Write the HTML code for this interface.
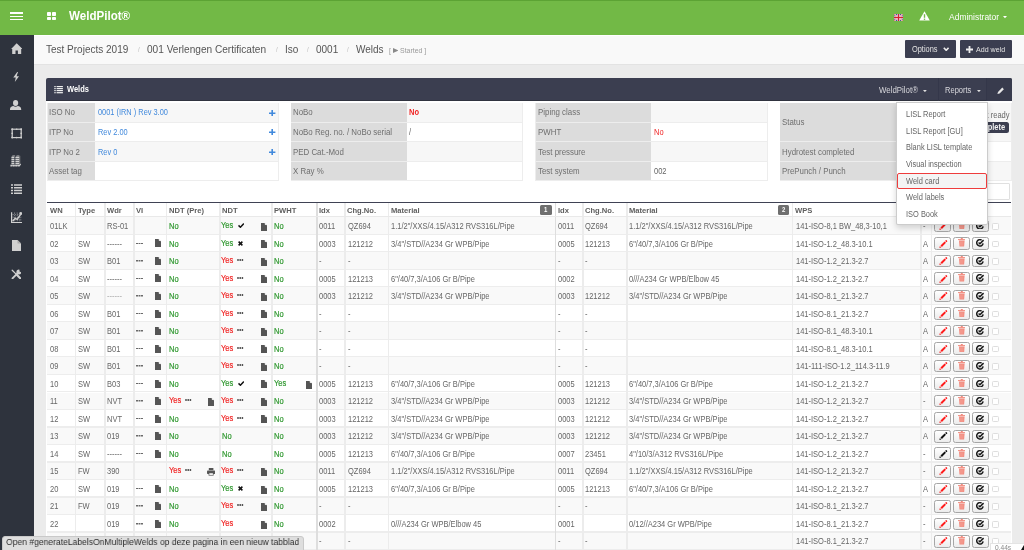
<!DOCTYPE html>
<html><head><meta charset="utf-8"><style>
*{box-sizing:border-box;margin:0;padding:0}
html,body{width:1024px;height:550px;overflow:hidden}
body{background:#ebebeb;font-family:"Liberation Sans", sans-serif;color:#666;position:relative}
.a{position:absolute}
.t{position:absolute;white-space:nowrap;line-height:1;transform-origin:0 0}
#wrap{position:absolute;left:0;top:0;width:1024px;height:550px;overflow:hidden;will-change:transform}
</style></head>
<body><div id="wrap">
<div class="a" style="left:0px;top:0px;width:1024px;height:34.5px;background:#72b946;border-top:1px solid #5ca334"></div><div class="a" style="left:10.2px;top:12.45px;width:12.7px;height:1.4px;background:#fff;"></div><div class="a" style="left:10.2px;top:15.7px;width:12.7px;height:1.4px;background:#fff;"></div><div class="a" style="left:10.2px;top:18.9px;width:12.7px;height:1.4px;background:#fff;"></div><div class="a" style="left:46.6px;top:12.4px;width:4.1px;height:3.2px;background:#fff;border-radius:0.8px"></div><div class="a" style="left:51.9px;top:12.4px;width:4.1px;height:3.2px;background:#fff;border-radius:0.8px"></div><div class="a" style="left:46.6px;top:17.1px;width:4.1px;height:3.2px;background:#fff;border-radius:0.8px"></div><div class="a" style="left:51.9px;top:17.1px;width:4.1px;height:3.2px;background:#fff;border-radius:0.8px"></div><div class="t" style="left:69.3px;top:10px;font-size:12.889px;transform:scaleX(0.9);color:#fff;font-weight:bold;">WeldPilot®</div><svg class="a" style="left:894px;top:14px;" width="9" height="7" viewBox="0 0 9 7"><rect width="9" height="7" fill="#2a3a8c"/><path d="M0 0L9 7M9 0L0 7" stroke="#fff" stroke-width="1.6"/><path d="M0 0L9 7M9 0L0 7" stroke="#d42030" stroke-width="0.6"/><path d="M4.5 0V7M0 3.5H9" stroke="#fff" stroke-width="2.4"/><path d="M4.5 0V7M0 3.5H9" stroke="#d42030" stroke-width="1.3"/></svg><svg class="a" style="left:919.3px;top:11.4px;" width="11" height="9.8" viewBox="0 0 11 9.8"><path d="M5.5 0.3L10.8 9.6H0.2Z" fill="#fff"/><rect x="4.8" y="3.2" width="1.4" height="3.6" fill="#72b946"/><rect x="4.8" y="7.6" width="1.4" height="1.3" fill="#72b946"/></svg><div class="t" style="left:949px;top:12px;font-size:9.444px;transform:scaleX(0.9);color:#fff;">Administrator</div><svg class="a" style="left:1003px;top:16.3px;" width="4" height="2.3" viewBox="0 0 4 2.3"><path d="M0 0H4L2 2.3Z" fill="#fff"/></svg><div class="a" style="left:0px;top:34.5px;width:33.8px;height:516px;background:#2e333d;"></div><svg class="a" style="left:10.8px;top:42.6px;" width="11.4" height="11.4" viewBox="0 0 11.4 11.4"><path d="M5.7 0.2L11.3 5.9H10.2V11.2H6.9V7.6H4.5V11.2H1.2V5.9H0.1Z" fill="#d0d0d0"/></svg><svg class="a" style="left:13px;top:72px;" width="6.4" height="10" viewBox="0 0 6.4 10"><path d="M4.2 0L0.3 5.6H2.8L1.8 10L6.1 4.2H3.6L5 0Z" fill="#d0d0d0"/></svg><svg class="a" style="left:10.4px;top:99.8px;" width="11.2" height="10.4" viewBox="0 0 11.2 10.4"><ellipse cx="5.6" cy="3.1" rx="2.6" ry="3.0" fill="#d0d0d0"/><path d="M0 10.4V9.2C0 7.2 1.6 6.5 3.4 6.1Q5.6 7.4 7.8 6.1C9.6 6.5 11.2 7.2 11.2 9.2V10.4Z" fill="#d0d0d0"/></svg><svg class="a" style="left:10.5px;top:128px;" width="11.4" height="10.8" viewBox="0 0 11.4 10.8"><rect x="1.2" y="1.2" width="9" height="8.4" fill="none" stroke="#d0d0d0" stroke-width="1.2"/><g fill="#d0d0d0"><circle cx="1.2" cy="1.2" r="1"/><circle cx="10.2" cy="1.2" r="1"/><circle cx="1.2" cy="9.6" r="1"/><circle cx="10.2" cy="9.6" r="1"/><circle cx="5.7" cy="1.2" r="0.8"/><circle cx="5.7" cy="9.6" r="0.8"/><circle cx="1.2" cy="5.4" r="0.8"/><circle cx="10.2" cy="5.4" r="0.8"/></g></svg><svg class="a" style="left:10px;top:154.7px;" width="11.2" height="12.2" viewBox="0 0 11.2 12.2"><path d="M2.6 0.6H5.4L4.6 1.6H1.6ZM6.8 0.6H9.6L9 1.6H5.8Z" fill="#bbb"/><g fill="#d0d0d0"><rect x="1.4" y="1.8" width="3" height="1.5"/><rect x="1.4" y="3.8" width="3" height="1.5"/><rect x="1.4" y="5.8" width="3" height="1.5"/><rect x="1.4" y="7.8" width="3" height="1.5"/><rect x="5.4" y="1.8" width="3.8" height="1.5"/><rect x="5.4" y="3.8" width="3.8" height="1.5"/><rect x="5.4" y="5.8" width="3.8" height="1.5"/><rect x="5.4" y="7.8" width="3.8" height="1.5"/></g><path d="M9.4 1.6L10.2 0.8V8.8L9.4 9.4Z" fill="#999"/><path d="M0.4 9.8H9.2L11 8.4V9.6L9.6 11.6H0.4Z" fill="#d0d0d0"/><path d="M2.4 11.6V10.8M5 11.6V10.8M7.6 11.6V10.8" stroke="#2e333c" stroke-width="0.8"/></svg><svg class="a" style="left:11px;top:184px;" width="11" height="10.3" viewBox="0 0 11 10.3"><path d="M0 1H2M0 3.7H2M0 6.5H2M0 9.3H2M3 1H11M3 3.7H11M3 6.5H11M3 9.3H11" stroke="#d0d0d0" stroke-width="1.5"/></svg><svg class="a" style="left:10.7px;top:211.8px;" width="11.5" height="11.2" viewBox="0 0 11.5 11.2"><path d="M0.6 0.3V10.6H11.5" stroke="#d0d0d0" stroke-width="1.2" fill="none"/><path d="M1.5 2.6H11M1.5 5.2H11M1.5 7.8H11M3.6 0.5V10M6.2 0.5V10M8.8 0.5V10" stroke="#d0d0d0" stroke-width="0.7" stroke-dasharray="1.3 1" opacity="0.75"/><path d="M1.6 9.2L4.2 6.4L6.2 7.4L9.6 2.4" stroke="#d0d0d0" stroke-width="1.4" fill="none"/><circle cx="9.9" cy="1.5" r="1.4" fill="#d0d0d0"/></svg><svg class="a" style="left:12px;top:240px;" width="9" height="11" viewBox="0 0 9 11"><path d="M0 0H5.5L9 3.5V11H0Z" fill="#d0d0d0"/><path d="M5.5 0V3.5H9" fill="#aaa"/></svg><svg class="a" style="left:10.6px;top:268.6px;" width="10.8" height="10.8" viewBox="0 0 10.8 10.8"><path d="M1.2 1.2L4.6 4.6" stroke="#d0d0d0" stroke-width="1.3" stroke-linecap="round"/><path d="M5.8 5.8L9.2 9.2" stroke="#d0d0d0" stroke-width="2.2" stroke-linecap="round"/><path d="M1.5 9.3L6.9 3.9" stroke="#d0d0d0" stroke-width="1.9" stroke-linecap="round"/><circle cx="7.9" cy="2.9" r="2.5" fill="#d0d0d0"/><path d="M8.2 0.2L10.8 0.2L10.8 2.6L8.9 3.2Z" fill="#2e333c"/></svg><div class="a" style="left:34px;top:34.5px;width:990px;height:30.5px;background:#f9f9f9;border-bottom:1px solid #e3e3e3;border-top:1px solid #fff"></div><div class="t" style="left:46.4px;top:44px;font-size:11.111px;transform:scaleX(0.9);color:#555;">Test Projects 2019</div><div class="t" style="left:137.6px;top:47px;font-size:6.667px;transform:scaleX(0.9);color:#bbb;">/</div><div class="t" style="left:146.8px;top:44px;font-size:11.222px;transform:scaleX(0.9);color:#555;">001 Verlengen Certificaten</div><div class="t" style="left:275.5px;top:47px;font-size:6.667px;transform:scaleX(0.9);color:#bbb;">/</div><div class="t" style="left:284.6px;top:44px;font-size:11.111px;transform:scaleX(0.9);color:#555;">Iso</div><div class="t" style="left:306.5px;top:47px;font-size:6.667px;transform:scaleX(0.9);color:#bbb;">/</div><div class="t" style="left:315.6px;top:44px;font-size:11.111px;transform:scaleX(0.9);color:#555;">0001</div><div class="t" style="left:346.5px;top:47px;font-size:6.667px;transform:scaleX(0.9);color:#bbb;">/</div><div class="t" style="left:355.6px;top:44px;font-size:11.111px;transform:scaleX(0.9);color:#555;">Welds</div><div class="t" style="left:388.8px;top:47px;font-size:7.722px;transform:scaleX(0.9);color:#999;">[</div><svg class="a" style="left:392.7px;top:47.9px;" width="5.4" height="5" viewBox="0 0 5.4 5"><path d="M0 0L5.4 2.5L0 5Z" fill="#8a8a8a"/></svg><div class="t" style="left:400.4px;top:47px;font-size:7.722px;transform:scaleX(0.9);color:#999;">Started ]</div><div class="a" style="left:905px;top:40px;width:51px;height:18px;background:#3b3e50;border-radius:1px"></div><div class="t" style="left:911.8px;top:46px;font-size:8.222px;transform:scaleX(0.9);color:#e2e2e2;">Options</div><svg class="a" style="left:942.8px;top:47px;" width="6.4" height="4.4" viewBox="0 0 6.4 4.4"><path d="M0.8 0.8L3.2 3.3L5.6 0.8" stroke="#eee" stroke-width="1.6" fill="none"/></svg><div class="a" style="left:959.8px;top:40px;width:52.2px;height:18px;background:#3b3e50;border-radius:1px"></div><svg class="a" style="left:966px;top:45.6px;" width="7" height="7" viewBox="0 0 7 7"><path d="M3.5 0V7M0 3.5H7" stroke="#eee" stroke-width="1.8"/></svg><div class="t" style="left:976px;top:46px;font-size:7.889px;transform:scaleX(0.9);color:#e2e2e2;">Add weld</div><div class="a" style="left:46px;top:78.4px;width:966.3px;height:22.8px;background:#3b3e50;border-radius:2px 2px 0 0;border-bottom:0.8px solid #30333f"></div><div class="a" style="left:46px;top:101.2px;width:966.3px;height:460px;background:#fff;"></div><svg class="a" style="left:54px;top:86px;" width="9" height="8" viewBox="0 0 9 8"><g fill="#f0f0f0"><rect x="0.3" y="0" width="1.4" height="1.2"/><rect x="0.3" y="2" width="1.4" height="1.2"/><rect x="0.3" y="4" width="1.4" height="1.2"/><rect x="0.3" y="6.1" width="1.4" height="1.2"/><rect x="2.6" y="0" width="6.3" height="1.2"/><rect x="2.6" y="2" width="6.3" height="1.2"/><rect x="2.6" y="4" width="6.3" height="1.2"/><rect x="2.6" y="6.1" width="6.3" height="1.2"/></g></svg><div class="t" style="left:67.2px;top:85px;font-size:8.333px;transform:scaleX(0.9);color:#fff;font-weight:bold;">Welds</div><div class="a" style="left:938px;top:78px;width:0.8px;height:23px;background:#34374a;"></div><div class="a" style="left:986.2px;top:78px;width:0.8px;height:23px;background:#34374a;"></div><div class="a" style="left:986.9px;top:78px;width:25.4px;height:23px;background:#383b4d;border-radius:0 2px 0 0"></div><div class="t" style="left:879px;top:86px;font-size:8.778px;transform:scaleX(0.9);color:#d7d7dc;">WeldPilot®</div><svg class="a" style="left:923.3px;top:89.6px;" width="3.8" height="2.2" viewBox="0 0 3.8 2.2"><path d="M0 0H3.8L1.9 2.2Z" fill="#ddd"/></svg><div class="t" style="left:944.7px;top:86px;font-size:8.389px;transform:scaleX(0.9);color:#d7d7dc;">Reports</div><svg class="a" style="left:977px;top:89.6px;" width="3.8" height="2.2" viewBox="0 0 3.8 2.2"><path d="M0 0H3.8L1.9 2.2Z" fill="#ddd"/></svg><svg class="a" style="left:996.8px;top:86.5px;" width="7.4" height="7.2" viewBox="0 0 7.4 7.2"><path d="M0.4 7L1 4.9L5.3 0.6L6.9 2.2L2.6 6.5Z" fill="#e8e8e8"/></svg><div class="a" style="left:46.800000000000004px;top:102.5px;width:232.3px;height:78.5px;background:#ededed;"></div><div class="a" style="left:47.6px;top:103px;width:47.6px;height:19px;background:#dcdcdc;"></div><div class="a" style="left:95.2px;top:103px;width:182.90000000000003px;height:19px;background:#f7f7f7;"></div><div class="t" style="left:49.1px;top:108px;font-size:8.778px;transform:scaleX(0.9);color:#6e6e6e;">ISO No</div><div class="t" style="left:97.60000000000001px;top:109px;font-size:8.222px;transform:scaleX(0.9);color:#4189dc;">0001 (IRN ) Rev 3.00</div><svg class="a" style="left:269.3px;top:109.5px;" width="6.4" height="6.4" viewBox="0 0 6.4 6.4"><path d="M3.2 0V6.4M0 3.2H6.4" stroke="#4189dc" stroke-width="1.6"/></svg><div class="a" style="left:47.6px;top:123px;width:47.6px;height:18px;background:#dcdcdc;"></div><div class="a" style="left:95.2px;top:123px;width:182.90000000000003px;height:18px;background:#ffffff;"></div><div class="t" style="left:49.1px;top:128px;font-size:8.778px;transform:scaleX(0.9);color:#6e6e6e;">ITP No</div><div class="t" style="left:97.60000000000001px;top:129px;font-size:8.222px;transform:scaleX(0.9);color:#4189dc;">Rev 2.00</div><svg class="a" style="left:269.3px;top:129.0px;" width="6.4" height="6.4" viewBox="0 0 6.4 6.4"><path d="M3.2 0V6.4M0 3.2H6.4" stroke="#4189dc" stroke-width="1.6"/></svg><div class="a" style="left:47.6px;top:142px;width:47.6px;height:19px;background:#dcdcdc;"></div><div class="a" style="left:95.2px;top:142px;width:182.90000000000003px;height:19px;background:#f7f7f7;"></div><div class="t" style="left:49.1px;top:148px;font-size:8.778px;transform:scaleX(0.9);color:#6e6e6e;">ITP No 2</div><div class="t" style="left:97.60000000000001px;top:149px;font-size:8.222px;transform:scaleX(0.9);color:#4189dc;">Rev 0</div><svg class="a" style="left:269.3px;top:148.5px;" width="6.4" height="6.4" viewBox="0 0 6.4 6.4"><path d="M3.2 0V6.4M0 3.2H6.4" stroke="#4189dc" stroke-width="1.6"/></svg><div class="a" style="left:47.6px;top:162px;width:47.6px;height:18px;background:#dcdcdc;"></div><div class="a" style="left:95.2px;top:162px;width:182.90000000000003px;height:18px;background:#ffffff;"></div><div class="t" style="left:49.1px;top:167px;font-size:8.778px;transform:scaleX(0.9);color:#6e6e6e;">Asset tag</div><div class="a" style="left:290.59999999999997px;top:102.5px;width:232.80000000000004px;height:78.5px;background:#ededed;"></div><div class="a" style="left:291.4px;top:103px;width:115.60000000000002px;height:19px;background:#dcdcdc;"></div><div class="a" style="left:407px;top:103px;width:115.40000000000002px;height:19px;background:#f7f7f7;"></div><div class="t" style="left:292.9px;top:108px;font-size:8.778px;transform:scaleX(0.9);color:#6e6e6e;">NoBo</div><div class="t" style="left:409.4px;top:108px;font-size:8.333px;transform:scaleX(0.9);color:#f02525;font-weight:bold;">No</div><div class="a" style="left:291.4px;top:123px;width:115.60000000000002px;height:18px;background:#dcdcdc;"></div><div class="a" style="left:407px;top:123px;width:115.40000000000002px;height:18px;background:#ffffff;"></div><div class="t" style="left:292.9px;top:128px;font-size:8.778px;transform:scaleX(0.9);color:#6e6e6e;">NoBo Reg. no. / NoBo serial</div><div class="t" style="left:409.4px;top:128px;font-size:8.333px;transform:scaleX(0.9);color:#666;">/</div><div class="a" style="left:291.4px;top:142px;width:115.60000000000002px;height:19px;background:#dcdcdc;"></div><div class="a" style="left:407px;top:142px;width:115.40000000000002px;height:19px;background:#f7f7f7;"></div><div class="t" style="left:292.9px;top:148px;font-size:8.778px;transform:scaleX(0.9);color:#6e6e6e;">PED Cat.-Mod</div><div class="a" style="left:291.4px;top:162px;width:115.60000000000002px;height:18px;background:#dcdcdc;"></div><div class="a" style="left:407px;top:162px;width:115.40000000000002px;height:18px;background:#ffffff;"></div><div class="t" style="left:292.9px;top:167px;font-size:8.778px;transform:scaleX(0.9);color:#6e6e6e;">X Ray %</div><div class="a" style="left:535.4000000000001px;top:102.5px;width:232.99999999999997px;height:78.5px;background:#ededed;"></div><div class="a" style="left:536.2px;top:103px;width:115.09999999999991px;height:19px;background:#dcdcdc;"></div><div class="a" style="left:651.3px;top:103px;width:116.10000000000007px;height:19px;background:#f7f7f7;"></div><div class="t" style="left:537.7px;top:108px;font-size:8.778px;transform:scaleX(0.9);color:#6e6e6e;">Piping class</div><div class="a" style="left:536.2px;top:123px;width:115.09999999999991px;height:18px;background:#dcdcdc;"></div><div class="a" style="left:651.3px;top:123px;width:116.10000000000007px;height:18px;background:#ffffff;"></div><div class="t" style="left:537.7px;top:128px;font-size:8.778px;transform:scaleX(0.9);color:#6e6e6e;">PWHT</div><div class="t" style="left:653.6999999999999px;top:128px;font-size:8.333px;transform:scaleX(0.9);color:#f02525;">No</div><div class="a" style="left:536.2px;top:142px;width:115.09999999999991px;height:19px;background:#dcdcdc;"></div><div class="a" style="left:651.3px;top:142px;width:116.10000000000007px;height:19px;background:#f7f7f7;"></div><div class="t" style="left:537.7px;top:148px;font-size:8.778px;transform:scaleX(0.9);color:#6e6e6e;">Test pressure</div><div class="a" style="left:536.2px;top:162px;width:115.09999999999991px;height:18px;background:#dcdcdc;"></div><div class="a" style="left:651.3px;top:162px;width:116.10000000000007px;height:18px;background:#ffffff;"></div><div class="t" style="left:537.7px;top:167px;font-size:8.778px;transform:scaleX(0.9);color:#6e6e6e;">Test system</div><div class="t" style="left:653.6999999999999px;top:167px;font-size:8.333px;transform:scaleX(0.9);color:#666;">002</div><div class="a" style="left:779.6px;top:102.5px;width:232.20000000000002px;height:78.5px;background:#ededed;"></div><div class="a" style="left:780.4px;top:103px;width:115.39999999999998px;height:38px;background:#dcdcdc;"></div><div class="a" style="left:895.8px;top:103px;width:115.00000000000004px;height:38px;background:#f7f7f7;"></div><div class="t" style="left:781.9px;top:118px;font-size:8.778px;transform:scaleX(0.9);color:#6e6e6e;">Status</div><div class="t" style="left:976.5px;top:111px;font-size:8.333px;transform:scaleX(0.9);color:#666;">Not ready</div><div class="a" style="left:965.8px;top:121.8px;width:43.3px;height:10.9px;background:#3b3e50;border-radius:2.5px"></div><div class="t" style="left:971.3px;top:123px;font-size:8.333px;transform:scaleX(0.9);color:#f4f4f4;font-weight:bold;">Complete</div><div class="a" style="left:780.4px;top:142px;width:115.39999999999998px;height:19px;background:#dcdcdc;"></div><div class="a" style="left:895.8px;top:142px;width:115.00000000000004px;height:19px;background:#ffffff;"></div><div class="t" style="left:781.9px;top:148px;font-size:8.778px;transform:scaleX(0.9);color:#6e6e6e;">Hydrotest completed</div><div class="a" style="left:780.4px;top:162px;width:115.39999999999998px;height:18px;background:#dcdcdc;"></div><div class="a" style="left:895.8px;top:162px;width:115.00000000000004px;height:18px;background:#f7f7f7;"></div><div class="t" style="left:781.9px;top:167px;font-size:8.778px;transform:scaleX(0.9);color:#6e6e6e;">PrePunch / Punch</div><div class="a" style="left:930px;top:182.8px;width:79.8px;height:16.8px;background:#fff;border:1px solid #e0e0e0;border-radius:1px"></div><div class="a" style="left:47px;top:202px;width:964.3px;height:1.5px;background:#3f4254;"></div><div class="a" style="left:47px;top:203.3px;width:964.3px;height:14.0px;background:#fff;"></div><div class="t" style="left:49.6px;top:207px;font-size:7.755px;transform:scaleX(0.98);color:#5e5e5e;font-weight:bold;">WN</div><div class="t" style="left:77.8px;top:207px;font-size:7.755px;transform:scaleX(0.98);color:#5e5e5e;font-weight:bold;">Type</div><div class="t" style="left:107.0px;top:207px;font-size:7.755px;transform:scaleX(0.98);color:#5e5e5e;font-weight:bold;">Wdr</div><div class="t" style="left:136.0px;top:207px;font-size:7.755px;transform:scaleX(0.98);color:#5e5e5e;font-weight:bold;">VI</div><div class="t" style="left:168.9px;top:207px;font-size:7.755px;transform:scaleX(0.98);color:#5e5e5e;font-weight:bold;">NDT (Pre)</div><div class="t" style="left:222.2px;top:207px;font-size:7.755px;transform:scaleX(0.98);color:#5e5e5e;font-weight:bold;">NDT</div><div class="t" style="left:274.3px;top:207px;font-size:7.755px;transform:scaleX(0.98);color:#5e5e5e;font-weight:bold;">PWHT</div><div class="t" style="left:319.3px;top:207px;font-size:7.755px;transform:scaleX(0.98);color:#5e5e5e;font-weight:bold;">Idx</div><div class="t" style="left:347.40000000000003px;top:207px;font-size:7.755px;transform:scaleX(0.98);color:#5e5e5e;font-weight:bold;">Chg.No.</div><div class="t" style="left:390.90000000000003px;top:207px;font-size:7.755px;transform:scaleX(0.98);color:#5e5e5e;font-weight:bold;">Material</div><div class="t" style="left:557.6px;top:207px;font-size:7.755px;transform:scaleX(0.98);color:#5e5e5e;font-weight:bold;">Idx</div><div class="t" style="left:585.2px;top:207px;font-size:7.755px;transform:scaleX(0.98);color:#5e5e5e;font-weight:bold;">Chg.No.</div><div class="t" style="left:629.1px;top:207px;font-size:7.755px;transform:scaleX(0.98);color:#5e5e5e;font-weight:bold;">Material</div><div class="t" style="left:794.8000000000001px;top:207px;font-size:7.755px;transform:scaleX(0.98);color:#5e5e5e;font-weight:bold;">WPS</div><div class="a" style="left:540px;top:205.20000000000002px;width:11.5px;height:9.4px;background:#6f6f6f;border-radius:1.5px"></div><div class="t" style="left:544px;top:207px;font-size:6.667px;transform:scaleX(0.9);color:#fff;font-weight:bold;">1</div><div class="a" style="left:777.5px;top:205.20000000000002px;width:11.5px;height:9.4px;background:#6f6f6f;border-radius:1.5px"></div><div class="t" style="left:781.5px;top:207px;font-size:6.667px;transform:scaleX(0.9);color:#fff;font-weight:bold;">2</div><div class="a" style="left:47px;top:217.3px;width:964.3px;height:17.52px;background:#f9f9f9;"></div><div class="a" style="left:47px;top:233.52px;width:964.3px;height:1.3px;background:#ededed;"></div><div class="t" style="left:49.7px;top:222px;font-size:8.333px;transform:scaleX(0.9);">01LK</div><div class="t" style="left:107.10000000000001px;top:222px;font-size:8.333px;transform:scaleX(0.9);">RS-01</div><div class="t" style="left:169.0px;top:222px;font-size:8.333px;transform:scaleX(0.9);color:#309830;-webkit-text-stroke:0.2px currentColor;">No</div><div class="t" style="left:221.1px;top:221px;font-size:8.333px;transform:scaleX(0.9);color:#309830;-webkit-text-stroke:0.2px currentColor;">Yes</div><svg class="a" style="left:237.79999999999998px;top:223.20000000000002px;" width="6.4" height="5" viewBox="0 0 6.4 5"><path d="M0.5 2.4L2.4 4.2L5.9 0.6" stroke="#111" stroke-width="1.5" fill="none"/></svg><svg class="a" style="left:260.6px;top:222.70000000000002px;" width="6" height="8" viewBox="0 0 6 8"><path d="M0 0H3.4L6 2.6V8H0Z" fill="#555"/><path d="M3.9 0.2L5.8 2.1H3.9Z" fill="#fff" opacity="0.85"/></svg><div class="t" style="left:274.09999999999997px;top:222px;font-size:8.333px;transform:scaleX(0.9);color:#309830;-webkit-text-stroke:0.2px currentColor;">No</div><div class="t" style="left:319.3px;top:222px;font-size:8.333px;transform:scaleX(0.9);">0011</div><div class="t" style="left:347.5px;top:222px;font-size:8.333px;transform:scaleX(0.9);">QZ694</div><div class="t" style="left:391.0px;top:222px;font-size:8.333px;transform:scaleX(0.9);">1.1/2&quot;/XXS/4.15/A312 RVS316L/Pipe</div><div class="t" style="left:557.6px;top:222px;font-size:8.333px;transform:scaleX(0.9);">0011</div><div class="t" style="left:585.3000000000001px;top:222px;font-size:8.333px;transform:scaleX(0.9);">QZ694</div><div class="t" style="left:629.2px;top:222px;font-size:8.333px;transform:scaleX(0.9);">1.1/2&quot;/XXS/4.15/A312 RVS316L/Pipe</div><div class="t" style="left:795.5px;top:222px;font-size:8.333px;transform:scaleX(0.9);">141-ISO-8,1 BW_48,3-10,1</div><div class="t" style="left:922.5px;top:222px;font-size:8.333px;transform:scaleX(0.9);">-</div><div class="a" style="left:934.4px;top:219.70000000000002px;width:17.1px;height:12.6px;border:1px solid #a6a6a6;border-radius:2.4px;background:linear-gradient(#fff,#ececec)"></div><svg class="a" style="left:939.4px;top:222.0px;" width="8.4" height="8.4" viewBox="0 0 8.4 8.4"><path d="M0.4 8L0.9 6.1L2.3 7.5Z" fill="#ff1a1a"/><path d="M1.5 5.5L5.6 1.4L7 2.8L2.9 6.9Z" fill="#ff1a1a"/><path d="M6.1 0.9L6.8 0.2Q7.2 -0.1 7.6 0.3L8.1 0.8Q8.5 1.2 8.2 1.6L7.5 2.3Z" fill="#ff1a1a"/></svg><div class="a" style="left:953.0px;top:219.70000000000002px;width:17.1px;height:12.6px;border:1px solid #a6a6a6;border-radius:2.4px;background:linear-gradient(#fff,#ececec)"></div><svg class="a" style="left:957.9px;top:220.9px;" width="7.6" height="8.6" viewBox="0 0 7.6 8.6"><path d="M0 1.1H7.6V2.1H0Z" fill="#f2897c"/><path d="M2.8 0H4.8V1.2H2.8Z" fill="#f2897c"/><path d="M1 2.4H6.6L6.1 8.6H1.5Z" fill="#f2897c"/><path d="M2.7 3.3V7.8M3.8 3.3V7.8M4.9 3.3V7.8" stroke="#f7b3aa" stroke-width="0.45"/></svg><div class="a" style="left:971.7px;top:219.70000000000002px;width:17.1px;height:12.6px;border:1px solid #a6a6a6;border-radius:2.4px;background:linear-gradient(#fff,#ececec)"></div><svg class="a" style="left:976.0px;top:221.9px;" width="8.6" height="7.6" viewBox="0 0 8.6 7.6"><path d="M7.1 4.3A3.2 3.2 0 1 1 5.6 1.1" stroke="#1a1a1a" stroke-width="1.5" fill="none"/><path d="M2.6 3.5L3.9 4.7L7.6 1.1" stroke="#1a1a1a" stroke-width="1.5" fill="none"/></svg><div class="a" style="left:992px;top:223.10000000000002px;width:6.8px;height:6.6px;border:1px solid #dedede;border-radius:1.4px;background:#fff"></div><div class="a" style="left:47px;top:234.82000000000002px;width:964.3px;height:17.52px;background:#ffffff;"></div><div class="a" style="left:47px;top:251.04000000000002px;width:964.3px;height:1.3px;background:#ededed;"></div><div class="t" style="left:49.7px;top:240px;font-size:8.333px;transform:scaleX(0.9);">02</div><div class="t" style="left:77.9px;top:240px;font-size:8.333px;transform:scaleX(0.9);">SW</div><div class="t" style="left:107.10000000000001px;top:240px;font-size:8.333px;transform:scaleX(0.9);">------</div><svg class="a" style="left:135.9px;top:242.62000000000003px;" width="7" height="1.6" viewBox="0 0 7 1.6"><path d="M0 0H2V1.6H0ZM2.5 0H4.5V1.6H2.5ZM5 0H7V1.6H5Z" fill="#6a6a6a"/></svg><svg class="a" style="left:155.0px;top:239.42000000000002px;" width="6" height="8" viewBox="0 0 6 8"><path d="M0 0H3.4L6 2.6V8H0Z" fill="#555"/><path d="M3.9 0.2L5.8 2.1H3.9Z" fill="#fff" opacity="0.85"/></svg><div class="t" style="left:169.0px;top:240px;font-size:8.333px;transform:scaleX(0.9);color:#309830;-webkit-text-stroke:0.2px currentColor;">No</div><div class="t" style="left:221.1px;top:239px;font-size:8.333px;transform:scaleX(0.9);color:#309830;-webkit-text-stroke:0.2px currentColor;">Yes</div><svg class="a" style="left:238.0px;top:241.02px;" width="5" height="5" viewBox="0 0 5 5"><path d="M0.6 0.6L4.4 4.4M4.4 0.6L0.6 4.4" stroke="#111" stroke-width="1.5"/></svg><svg class="a" style="left:260.6px;top:240.22000000000003px;" width="6" height="8" viewBox="0 0 6 8"><path d="M0 0H3.4L6 2.6V8H0Z" fill="#555"/><path d="M3.9 0.2L5.8 2.1H3.9Z" fill="#fff" opacity="0.85"/></svg><div class="t" style="left:274.09999999999997px;top:240px;font-size:8.333px;transform:scaleX(0.9);color:#309830;-webkit-text-stroke:0.2px currentColor;">No</div><div class="t" style="left:319.3px;top:240px;font-size:8.333px;transform:scaleX(0.9);">0003</div><div class="t" style="left:347.5px;top:240px;font-size:8.333px;transform:scaleX(0.9);">121212</div><div class="t" style="left:391.0px;top:240px;font-size:8.333px;transform:scaleX(0.9);">3/4&quot;/STD//A234 Gr WPB/Pipe</div><div class="t" style="left:557.6px;top:240px;font-size:8.333px;transform:scaleX(0.9);">0005</div><div class="t" style="left:585.3000000000001px;top:240px;font-size:8.333px;transform:scaleX(0.9);">121213</div><div class="t" style="left:629.2px;top:240px;font-size:8.333px;transform:scaleX(0.9);">6&quot;/40/7,3/A106 Gr B/Pipe</div><div class="t" style="left:795.5px;top:240px;font-size:8.333px;transform:scaleX(0.9);">141-ISO-1.2_48.3-10.1</div><div class="t" style="left:922.5px;top:240px;font-size:8.333px;transform:scaleX(0.9);">A</div><div class="a" style="left:934.4px;top:237.22000000000003px;width:17.1px;height:12.6px;border:1px solid #a6a6a6;border-radius:2.4px;background:linear-gradient(#fff,#ececec)"></div><svg class="a" style="left:939.4px;top:239.52px;" width="8.4" height="8.4" viewBox="0 0 8.4 8.4"><path d="M0.4 8L0.9 6.1L2.3 7.5Z" fill="#ff1a1a"/><path d="M1.5 5.5L5.6 1.4L7 2.8L2.9 6.9Z" fill="#ff1a1a"/><path d="M6.1 0.9L6.8 0.2Q7.2 -0.1 7.6 0.3L8.1 0.8Q8.5 1.2 8.2 1.6L7.5 2.3Z" fill="#ff1a1a"/></svg><div class="a" style="left:953.0px;top:237.22000000000003px;width:17.1px;height:12.6px;border:1px solid #a6a6a6;border-radius:2.4px;background:linear-gradient(#fff,#ececec)"></div><svg class="a" style="left:957.9px;top:238.42000000000002px;" width="7.6" height="8.6" viewBox="0 0 7.6 8.6"><path d="M0 1.1H7.6V2.1H0Z" fill="#f2897c"/><path d="M2.8 0H4.8V1.2H2.8Z" fill="#f2897c"/><path d="M1 2.4H6.6L6.1 8.6H1.5Z" fill="#f2897c"/><path d="M2.7 3.3V7.8M3.8 3.3V7.8M4.9 3.3V7.8" stroke="#f7b3aa" stroke-width="0.45"/></svg><div class="a" style="left:971.7px;top:237.22000000000003px;width:17.1px;height:12.6px;border:1px solid #a6a6a6;border-radius:2.4px;background:linear-gradient(#fff,#ececec)"></div><svg class="a" style="left:976.0px;top:239.42000000000002px;" width="8.6" height="7.6" viewBox="0 0 8.6 7.6"><path d="M7.1 4.3A3.2 3.2 0 1 1 5.6 1.1" stroke="#1a1a1a" stroke-width="1.5" fill="none"/><path d="M2.6 3.5L3.9 4.7L7.6 1.1" stroke="#1a1a1a" stroke-width="1.5" fill="none"/></svg><div class="a" style="left:992px;top:240.62000000000003px;width:6.8px;height:6.6px;border:1px solid #dedede;border-radius:1.4px;background:#fff"></div><div class="a" style="left:47px;top:252.34px;width:964.3px;height:17.52px;background:#f9f9f9;"></div><div class="a" style="left:47px;top:268.56px;width:964.3px;height:1.3px;background:#ededed;"></div><div class="t" style="left:49.7px;top:257px;font-size:8.333px;transform:scaleX(0.9);">03</div><div class="t" style="left:77.9px;top:257px;font-size:8.333px;transform:scaleX(0.9);">SW</div><div class="t" style="left:107.10000000000001px;top:257px;font-size:8.333px;transform:scaleX(0.9);">B01</div><svg class="a" style="left:135.9px;top:260.14px;" width="7" height="1.6" viewBox="0 0 7 1.6"><path d="M0 0H2V1.6H0ZM2.5 0H4.5V1.6H2.5ZM5 0H7V1.6H5Z" fill="#6a6a6a"/></svg><svg class="a" style="left:155.0px;top:256.94px;" width="6" height="8" viewBox="0 0 6 8"><path d="M0 0H3.4L6 2.6V8H0Z" fill="#555"/><path d="M3.9 0.2L5.8 2.1H3.9Z" fill="#fff" opacity="0.85"/></svg><div class="t" style="left:169.0px;top:257px;font-size:8.333px;transform:scaleX(0.9);color:#309830;-webkit-text-stroke:0.2px currentColor;">No</div><div class="t" style="left:221.1px;top:256px;font-size:8.333px;transform:scaleX(0.9);color:#f02525;-webkit-text-stroke:0.2px currentColor;">Yes</div><svg class="a" style="left:237.0px;top:259.14px;" width="7" height="2" viewBox="0 0 7 2"><circle cx="1" cy="1" r="0.9" fill="#444"/><circle cx="3.2" cy="1" r="0.9" fill="#444"/><circle cx="5.4" cy="1" r="0.9" fill="#444"/></svg><svg class="a" style="left:260.6px;top:257.74px;" width="6" height="8" viewBox="0 0 6 8"><path d="M0 0H3.4L6 2.6V8H0Z" fill="#555"/><path d="M3.9 0.2L5.8 2.1H3.9Z" fill="#fff" opacity="0.85"/></svg><div class="t" style="left:274.09999999999997px;top:257px;font-size:8.333px;transform:scaleX(0.9);color:#309830;-webkit-text-stroke:0.2px currentColor;">No</div><div class="t" style="left:319.3px;top:257px;font-size:8.333px;transform:scaleX(0.9);">-</div><div class="t" style="left:347.5px;top:257px;font-size:8.333px;transform:scaleX(0.9);">-</div><div class="t" style="left:557.6px;top:257px;font-size:8.333px;transform:scaleX(0.9);">-</div><div class="t" style="left:585.3000000000001px;top:257px;font-size:8.333px;transform:scaleX(0.9);">-</div><div class="t" style="left:795.5px;top:257px;font-size:8.333px;transform:scaleX(0.9);">141-ISO-1.2_21.3-2.7</div><div class="t" style="left:922.5px;top:257px;font-size:8.333px;transform:scaleX(0.9);">A</div><div class="a" style="left:934.4px;top:254.74px;width:17.1px;height:12.6px;border:1px solid #a6a6a6;border-radius:2.4px;background:linear-gradient(#fff,#ececec)"></div><svg class="a" style="left:939.4px;top:257.04px;" width="8.4" height="8.4" viewBox="0 0 8.4 8.4"><path d="M0.4 8L0.9 6.1L2.3 7.5Z" fill="#ff1a1a"/><path d="M1.5 5.5L5.6 1.4L7 2.8L2.9 6.9Z" fill="#ff1a1a"/><path d="M6.1 0.9L6.8 0.2Q7.2 -0.1 7.6 0.3L8.1 0.8Q8.5 1.2 8.2 1.6L7.5 2.3Z" fill="#ff1a1a"/></svg><div class="a" style="left:953.0px;top:254.74px;width:17.1px;height:12.6px;border:1px solid #a6a6a6;border-radius:2.4px;background:linear-gradient(#fff,#ececec)"></div><svg class="a" style="left:957.9px;top:255.94px;" width="7.6" height="8.6" viewBox="0 0 7.6 8.6"><path d="M0 1.1H7.6V2.1H0Z" fill="#f2897c"/><path d="M2.8 0H4.8V1.2H2.8Z" fill="#f2897c"/><path d="M1 2.4H6.6L6.1 8.6H1.5Z" fill="#f2897c"/><path d="M2.7 3.3V7.8M3.8 3.3V7.8M4.9 3.3V7.8" stroke="#f7b3aa" stroke-width="0.45"/></svg><div class="a" style="left:971.7px;top:254.74px;width:17.1px;height:12.6px;border:1px solid #a6a6a6;border-radius:2.4px;background:linear-gradient(#fff,#ececec)"></div><svg class="a" style="left:976.0px;top:256.94px;" width="8.6" height="7.6" viewBox="0 0 8.6 7.6"><path d="M7.1 4.3A3.2 3.2 0 1 1 5.6 1.1" stroke="#1a1a1a" stroke-width="1.5" fill="none"/><path d="M2.6 3.5L3.9 4.7L7.6 1.1" stroke="#1a1a1a" stroke-width="1.5" fill="none"/></svg><div class="a" style="left:992px;top:258.14px;width:6.8px;height:6.6px;border:1px solid #dedede;border-radius:1.4px;background:#fff"></div><div class="a" style="left:47px;top:269.86px;width:964.3px;height:17.52px;background:#ffffff;"></div><div class="a" style="left:47px;top:286.08px;width:964.3px;height:1.3px;background:#ededed;"></div><div class="t" style="left:49.7px;top:275px;font-size:8.333px;transform:scaleX(0.9);">04</div><div class="t" style="left:77.9px;top:275px;font-size:8.333px;transform:scaleX(0.9);">SW</div><div class="t" style="left:107.10000000000001px;top:275px;font-size:8.333px;transform:scaleX(0.9);">------</div><svg class="a" style="left:135.9px;top:277.66px;" width="7" height="1.6" viewBox="0 0 7 1.6"><path d="M0 0H2V1.6H0ZM2.5 0H4.5V1.6H2.5ZM5 0H7V1.6H5Z" fill="#6a6a6a"/></svg><svg class="a" style="left:155.0px;top:274.46000000000004px;" width="6" height="8" viewBox="0 0 6 8"><path d="M0 0H3.4L6 2.6V8H0Z" fill="#555"/><path d="M3.9 0.2L5.8 2.1H3.9Z" fill="#fff" opacity="0.85"/></svg><div class="t" style="left:169.0px;top:275px;font-size:8.333px;transform:scaleX(0.9);color:#309830;-webkit-text-stroke:0.2px currentColor;">No</div><div class="t" style="left:221.1px;top:274px;font-size:8.333px;transform:scaleX(0.9);color:#f02525;-webkit-text-stroke:0.2px currentColor;">Yes</div><svg class="a" style="left:237.0px;top:276.66px;" width="7" height="2" viewBox="0 0 7 2"><circle cx="1" cy="1" r="0.9" fill="#444"/><circle cx="3.2" cy="1" r="0.9" fill="#444"/><circle cx="5.4" cy="1" r="0.9" fill="#444"/></svg><svg class="a" style="left:260.6px;top:275.26px;" width="6" height="8" viewBox="0 0 6 8"><path d="M0 0H3.4L6 2.6V8H0Z" fill="#555"/><path d="M3.9 0.2L5.8 2.1H3.9Z" fill="#fff" opacity="0.85"/></svg><div class="t" style="left:274.09999999999997px;top:275px;font-size:8.333px;transform:scaleX(0.9);color:#309830;-webkit-text-stroke:0.2px currentColor;">No</div><div class="t" style="left:319.3px;top:275px;font-size:8.333px;transform:scaleX(0.9);">0005</div><div class="t" style="left:347.5px;top:275px;font-size:8.333px;transform:scaleX(0.9);">121213</div><div class="t" style="left:391.0px;top:275px;font-size:8.333px;transform:scaleX(0.9);">6&quot;/40/7,3/A106 Gr B/Pipe</div><div class="t" style="left:557.6px;top:275px;font-size:8.333px;transform:scaleX(0.9);">0002</div><div class="t" style="left:629.2px;top:275px;font-size:8.333px;transform:scaleX(0.9);">0///A234 Gr WPB/Elbow 45</div><div class="t" style="left:795.5px;top:275px;font-size:8.333px;transform:scaleX(0.9);">141-ISO-1.2_21.3-2.7</div><div class="t" style="left:922.5px;top:275px;font-size:8.333px;transform:scaleX(0.9);">A</div><div class="a" style="left:934.4px;top:272.26px;width:17.1px;height:12.6px;border:1px solid #a6a6a6;border-radius:2.4px;background:linear-gradient(#fff,#ececec)"></div><svg class="a" style="left:939.4px;top:274.56px;" width="8.4" height="8.4" viewBox="0 0 8.4 8.4"><path d="M0.4 8L0.9 6.1L2.3 7.5Z" fill="#ff1a1a"/><path d="M1.5 5.5L5.6 1.4L7 2.8L2.9 6.9Z" fill="#ff1a1a"/><path d="M6.1 0.9L6.8 0.2Q7.2 -0.1 7.6 0.3L8.1 0.8Q8.5 1.2 8.2 1.6L7.5 2.3Z" fill="#ff1a1a"/></svg><div class="a" style="left:953.0px;top:272.26px;width:17.1px;height:12.6px;border:1px solid #a6a6a6;border-radius:2.4px;background:linear-gradient(#fff,#ececec)"></div><svg class="a" style="left:957.9px;top:273.46000000000004px;" width="7.6" height="8.6" viewBox="0 0 7.6 8.6"><path d="M0 1.1H7.6V2.1H0Z" fill="#f2897c"/><path d="M2.8 0H4.8V1.2H2.8Z" fill="#f2897c"/><path d="M1 2.4H6.6L6.1 8.6H1.5Z" fill="#f2897c"/><path d="M2.7 3.3V7.8M3.8 3.3V7.8M4.9 3.3V7.8" stroke="#f7b3aa" stroke-width="0.45"/></svg><div class="a" style="left:971.7px;top:272.26px;width:17.1px;height:12.6px;border:1px solid #a6a6a6;border-radius:2.4px;background:linear-gradient(#fff,#ececec)"></div><svg class="a" style="left:976.0px;top:274.46000000000004px;" width="8.6" height="7.6" viewBox="0 0 8.6 7.6"><path d="M7.1 4.3A3.2 3.2 0 1 1 5.6 1.1" stroke="#1a1a1a" stroke-width="1.5" fill="none"/><path d="M2.6 3.5L3.9 4.7L7.6 1.1" stroke="#1a1a1a" stroke-width="1.5" fill="none"/></svg><div class="a" style="left:992px;top:275.66px;width:6.8px;height:6.6px;border:1px solid #dedede;border-radius:1.4px;background:#fff"></div><div class="a" style="left:47px;top:287.38px;width:964.3px;height:17.52px;background:#f9f9f9;"></div><div class="a" style="left:47px;top:303.59999999999997px;width:964.3px;height:1.3px;background:#ededed;"></div><div class="t" style="left:49.7px;top:292px;font-size:8.333px;transform:scaleX(0.9);">05</div><div class="t" style="left:77.9px;top:292px;font-size:8.333px;transform:scaleX(0.9);">SW</div><div class="t" style="left:107.10000000000001px;top:292px;font-size:8.333px;transform:scaleX(0.9);color:#aaa;">------</div><svg class="a" style="left:135.9px;top:295.18px;" width="7" height="1.6" viewBox="0 0 7 1.6"><path d="M0 0H2V1.6H0ZM2.5 0H4.5V1.6H2.5ZM5 0H7V1.6H5Z" fill="#6a6a6a"/></svg><svg class="a" style="left:155.0px;top:291.98px;" width="6" height="8" viewBox="0 0 6 8"><path d="M0 0H3.4L6 2.6V8H0Z" fill="#555"/><path d="M3.9 0.2L5.8 2.1H3.9Z" fill="#fff" opacity="0.85"/></svg><div class="t" style="left:169.0px;top:292px;font-size:8.333px;transform:scaleX(0.9);color:#309830;-webkit-text-stroke:0.2px currentColor;">No</div><div class="t" style="left:221.1px;top:291px;font-size:8.333px;transform:scaleX(0.9);color:#f02525;-webkit-text-stroke:0.2px currentColor;">Yes</div><svg class="a" style="left:237.0px;top:294.18px;" width="7" height="2" viewBox="0 0 7 2"><circle cx="1" cy="1" r="0.9" fill="#444"/><circle cx="3.2" cy="1" r="0.9" fill="#444"/><circle cx="5.4" cy="1" r="0.9" fill="#444"/></svg><svg class="a" style="left:260.6px;top:292.78px;" width="6" height="8" viewBox="0 0 6 8"><path d="M0 0H3.4L6 2.6V8H0Z" fill="#555"/><path d="M3.9 0.2L5.8 2.1H3.9Z" fill="#fff" opacity="0.85"/></svg><div class="t" style="left:274.09999999999997px;top:292px;font-size:8.333px;transform:scaleX(0.9);color:#309830;-webkit-text-stroke:0.2px currentColor;">No</div><div class="t" style="left:319.3px;top:292px;font-size:8.333px;transform:scaleX(0.9);">0003</div><div class="t" style="left:347.5px;top:292px;font-size:8.333px;transform:scaleX(0.9);">121212</div><div class="t" style="left:391.0px;top:292px;font-size:8.333px;transform:scaleX(0.9);">3/4&quot;/STD//A234 Gr WPB/Pipe</div><div class="t" style="left:557.6px;top:292px;font-size:8.333px;transform:scaleX(0.9);">0003</div><div class="t" style="left:585.3000000000001px;top:292px;font-size:8.333px;transform:scaleX(0.9);">121212</div><div class="t" style="left:629.2px;top:292px;font-size:8.333px;transform:scaleX(0.9);">3/4&quot;/STD//A234 Gr WPB/Pipe</div><div class="t" style="left:795.5px;top:292px;font-size:8.333px;transform:scaleX(0.9);">141-ISO-8.1_21.3-2.7</div><div class="t" style="left:922.5px;top:292px;font-size:8.333px;transform:scaleX(0.9);">A</div><div class="a" style="left:934.4px;top:289.78px;width:17.1px;height:12.6px;border:1px solid #a6a6a6;border-radius:2.4px;background:linear-gradient(#fff,#ececec)"></div><svg class="a" style="left:939.4px;top:292.08px;" width="8.4" height="8.4" viewBox="0 0 8.4 8.4"><path d="M0.4 8L0.9 6.1L2.3 7.5Z" fill="#ff1a1a"/><path d="M1.5 5.5L5.6 1.4L7 2.8L2.9 6.9Z" fill="#ff1a1a"/><path d="M6.1 0.9L6.8 0.2Q7.2 -0.1 7.6 0.3L8.1 0.8Q8.5 1.2 8.2 1.6L7.5 2.3Z" fill="#ff1a1a"/></svg><div class="a" style="left:953.0px;top:289.78px;width:17.1px;height:12.6px;border:1px solid #a6a6a6;border-radius:2.4px;background:linear-gradient(#fff,#ececec)"></div><svg class="a" style="left:957.9px;top:290.98px;" width="7.6" height="8.6" viewBox="0 0 7.6 8.6"><path d="M0 1.1H7.6V2.1H0Z" fill="#f2897c"/><path d="M2.8 0H4.8V1.2H2.8Z" fill="#f2897c"/><path d="M1 2.4H6.6L6.1 8.6H1.5Z" fill="#f2897c"/><path d="M2.7 3.3V7.8M3.8 3.3V7.8M4.9 3.3V7.8" stroke="#f7b3aa" stroke-width="0.45"/></svg><div class="a" style="left:971.7px;top:289.78px;width:17.1px;height:12.6px;border:1px solid #a6a6a6;border-radius:2.4px;background:linear-gradient(#fff,#ececec)"></div><svg class="a" style="left:976.0px;top:291.98px;" width="8.6" height="7.6" viewBox="0 0 8.6 7.6"><path d="M7.1 4.3A3.2 3.2 0 1 1 5.6 1.1" stroke="#1a1a1a" stroke-width="1.5" fill="none"/><path d="M2.6 3.5L3.9 4.7L7.6 1.1" stroke="#1a1a1a" stroke-width="1.5" fill="none"/></svg><div class="a" style="left:992px;top:293.18px;width:6.8px;height:6.6px;border:1px solid #dedede;border-radius:1.4px;background:#fff"></div><div class="a" style="left:47px;top:304.9px;width:964.3px;height:17.52px;background:#ffffff;"></div><div class="a" style="left:47px;top:321.11999999999995px;width:964.3px;height:1.3px;background:#ededed;"></div><div class="t" style="left:49.7px;top:310px;font-size:8.333px;transform:scaleX(0.9);">06</div><div class="t" style="left:77.9px;top:310px;font-size:8.333px;transform:scaleX(0.9);">SW</div><div class="t" style="left:107.10000000000001px;top:310px;font-size:8.333px;transform:scaleX(0.9);">B01</div><svg class="a" style="left:135.9px;top:312.7px;" width="7" height="1.6" viewBox="0 0 7 1.6"><path d="M0 0H2V1.6H0ZM2.5 0H4.5V1.6H2.5ZM5 0H7V1.6H5Z" fill="#6a6a6a"/></svg><svg class="a" style="left:155.0px;top:309.5px;" width="6" height="8" viewBox="0 0 6 8"><path d="M0 0H3.4L6 2.6V8H0Z" fill="#555"/><path d="M3.9 0.2L5.8 2.1H3.9Z" fill="#fff" opacity="0.85"/></svg><div class="t" style="left:169.0px;top:310px;font-size:8.333px;transform:scaleX(0.9);color:#309830;-webkit-text-stroke:0.2px currentColor;">No</div><div class="t" style="left:221.1px;top:309px;font-size:8.333px;transform:scaleX(0.9);color:#f02525;-webkit-text-stroke:0.2px currentColor;">Yes</div><svg class="a" style="left:237.0px;top:311.7px;" width="7" height="2" viewBox="0 0 7 2"><circle cx="1" cy="1" r="0.9" fill="#444"/><circle cx="3.2" cy="1" r="0.9" fill="#444"/><circle cx="5.4" cy="1" r="0.9" fill="#444"/></svg><svg class="a" style="left:260.6px;top:310.29999999999995px;" width="6" height="8" viewBox="0 0 6 8"><path d="M0 0H3.4L6 2.6V8H0Z" fill="#555"/><path d="M3.9 0.2L5.8 2.1H3.9Z" fill="#fff" opacity="0.85"/></svg><div class="t" style="left:274.09999999999997px;top:310px;font-size:8.333px;transform:scaleX(0.9);color:#309830;-webkit-text-stroke:0.2px currentColor;">No</div><div class="t" style="left:319.3px;top:310px;font-size:8.333px;transform:scaleX(0.9);">-</div><div class="t" style="left:347.5px;top:310px;font-size:8.333px;transform:scaleX(0.9);">-</div><div class="t" style="left:557.6px;top:310px;font-size:8.333px;transform:scaleX(0.9);">-</div><div class="t" style="left:585.3000000000001px;top:310px;font-size:8.333px;transform:scaleX(0.9);">-</div><div class="t" style="left:795.5px;top:310px;font-size:8.333px;transform:scaleX(0.9);">141-ISO-8.1_21.3-2.7</div><div class="t" style="left:922.5px;top:310px;font-size:8.333px;transform:scaleX(0.9);">A</div><div class="a" style="left:934.4px;top:307.29999999999995px;width:17.1px;height:12.6px;border:1px solid #a6a6a6;border-radius:2.4px;background:linear-gradient(#fff,#ececec)"></div><svg class="a" style="left:939.4px;top:309.59999999999997px;" width="8.4" height="8.4" viewBox="0 0 8.4 8.4"><path d="M0.4 8L0.9 6.1L2.3 7.5Z" fill="#ff1a1a"/><path d="M1.5 5.5L5.6 1.4L7 2.8L2.9 6.9Z" fill="#ff1a1a"/><path d="M6.1 0.9L6.8 0.2Q7.2 -0.1 7.6 0.3L8.1 0.8Q8.5 1.2 8.2 1.6L7.5 2.3Z" fill="#ff1a1a"/></svg><div class="a" style="left:953.0px;top:307.29999999999995px;width:17.1px;height:12.6px;border:1px solid #a6a6a6;border-radius:2.4px;background:linear-gradient(#fff,#ececec)"></div><svg class="a" style="left:957.9px;top:308.5px;" width="7.6" height="8.6" viewBox="0 0 7.6 8.6"><path d="M0 1.1H7.6V2.1H0Z" fill="#f2897c"/><path d="M2.8 0H4.8V1.2H2.8Z" fill="#f2897c"/><path d="M1 2.4H6.6L6.1 8.6H1.5Z" fill="#f2897c"/><path d="M2.7 3.3V7.8M3.8 3.3V7.8M4.9 3.3V7.8" stroke="#f7b3aa" stroke-width="0.45"/></svg><div class="a" style="left:971.7px;top:307.29999999999995px;width:17.1px;height:12.6px;border:1px solid #a6a6a6;border-radius:2.4px;background:linear-gradient(#fff,#ececec)"></div><svg class="a" style="left:976.0px;top:309.5px;" width="8.6" height="7.6" viewBox="0 0 8.6 7.6"><path d="M7.1 4.3A3.2 3.2 0 1 1 5.6 1.1" stroke="#1a1a1a" stroke-width="1.5" fill="none"/><path d="M2.6 3.5L3.9 4.7L7.6 1.1" stroke="#1a1a1a" stroke-width="1.5" fill="none"/></svg><div class="a" style="left:992px;top:310.7px;width:6.8px;height:6.6px;border:1px solid #dedede;border-radius:1.4px;background:#fff"></div><div class="a" style="left:47px;top:322.42px;width:964.3px;height:17.52px;background:#f9f9f9;"></div><div class="a" style="left:47px;top:338.64px;width:964.3px;height:1.3px;background:#ededed;"></div><div class="t" style="left:49.7px;top:327px;font-size:8.333px;transform:scaleX(0.9);">07</div><div class="t" style="left:77.9px;top:327px;font-size:8.333px;transform:scaleX(0.9);">SW</div><div class="t" style="left:107.10000000000001px;top:327px;font-size:8.333px;transform:scaleX(0.9);">B01</div><svg class="a" style="left:135.9px;top:330.22px;" width="7" height="1.6" viewBox="0 0 7 1.6"><path d="M0 0H2V1.6H0ZM2.5 0H4.5V1.6H2.5ZM5 0H7V1.6H5Z" fill="#6a6a6a"/></svg><svg class="a" style="left:155.0px;top:327.02000000000004px;" width="6" height="8" viewBox="0 0 6 8"><path d="M0 0H3.4L6 2.6V8H0Z" fill="#555"/><path d="M3.9 0.2L5.8 2.1H3.9Z" fill="#fff" opacity="0.85"/></svg><div class="t" style="left:169.0px;top:327px;font-size:8.333px;transform:scaleX(0.9);color:#309830;-webkit-text-stroke:0.2px currentColor;">No</div><div class="t" style="left:221.1px;top:326px;font-size:8.333px;transform:scaleX(0.9);color:#f02525;-webkit-text-stroke:0.2px currentColor;">Yes</div><svg class="a" style="left:237.0px;top:329.22px;" width="7" height="2" viewBox="0 0 7 2"><circle cx="1" cy="1" r="0.9" fill="#444"/><circle cx="3.2" cy="1" r="0.9" fill="#444"/><circle cx="5.4" cy="1" r="0.9" fill="#444"/></svg><svg class="a" style="left:260.6px;top:327.82px;" width="6" height="8" viewBox="0 0 6 8"><path d="M0 0H3.4L6 2.6V8H0Z" fill="#555"/><path d="M3.9 0.2L5.8 2.1H3.9Z" fill="#fff" opacity="0.85"/></svg><div class="t" style="left:274.09999999999997px;top:327px;font-size:8.333px;transform:scaleX(0.9);color:#309830;-webkit-text-stroke:0.2px currentColor;">No</div><div class="t" style="left:319.3px;top:327px;font-size:8.333px;transform:scaleX(0.9);">-</div><div class="t" style="left:347.5px;top:327px;font-size:8.333px;transform:scaleX(0.9);">-</div><div class="t" style="left:557.6px;top:327px;font-size:8.333px;transform:scaleX(0.9);">-</div><div class="t" style="left:585.3000000000001px;top:327px;font-size:8.333px;transform:scaleX(0.9);">-</div><div class="t" style="left:795.5px;top:327px;font-size:8.333px;transform:scaleX(0.9);">141-ISO-8.1_48.3-10.1</div><div class="t" style="left:922.5px;top:327px;font-size:8.333px;transform:scaleX(0.9);">A</div><div class="a" style="left:934.4px;top:324.82px;width:17.1px;height:12.6px;border:1px solid #a6a6a6;border-radius:2.4px;background:linear-gradient(#fff,#ececec)"></div><svg class="a" style="left:939.4px;top:327.12px;" width="8.4" height="8.4" viewBox="0 0 8.4 8.4"><path d="M0.4 8L0.9 6.1L2.3 7.5Z" fill="#ff1a1a"/><path d="M1.5 5.5L5.6 1.4L7 2.8L2.9 6.9Z" fill="#ff1a1a"/><path d="M6.1 0.9L6.8 0.2Q7.2 -0.1 7.6 0.3L8.1 0.8Q8.5 1.2 8.2 1.6L7.5 2.3Z" fill="#ff1a1a"/></svg><div class="a" style="left:953.0px;top:324.82px;width:17.1px;height:12.6px;border:1px solid #a6a6a6;border-radius:2.4px;background:linear-gradient(#fff,#ececec)"></div><svg class="a" style="left:957.9px;top:326.02000000000004px;" width="7.6" height="8.6" viewBox="0 0 7.6 8.6"><path d="M0 1.1H7.6V2.1H0Z" fill="#f2897c"/><path d="M2.8 0H4.8V1.2H2.8Z" fill="#f2897c"/><path d="M1 2.4H6.6L6.1 8.6H1.5Z" fill="#f2897c"/><path d="M2.7 3.3V7.8M3.8 3.3V7.8M4.9 3.3V7.8" stroke="#f7b3aa" stroke-width="0.45"/></svg><div class="a" style="left:971.7px;top:324.82px;width:17.1px;height:12.6px;border:1px solid #a6a6a6;border-radius:2.4px;background:linear-gradient(#fff,#ececec)"></div><svg class="a" style="left:976.0px;top:327.02000000000004px;" width="8.6" height="7.6" viewBox="0 0 8.6 7.6"><path d="M7.1 4.3A3.2 3.2 0 1 1 5.6 1.1" stroke="#1a1a1a" stroke-width="1.5" fill="none"/><path d="M2.6 3.5L3.9 4.7L7.6 1.1" stroke="#1a1a1a" stroke-width="1.5" fill="none"/></svg><div class="a" style="left:992px;top:328.22px;width:6.8px;height:6.6px;border:1px solid #dedede;border-radius:1.4px;background:#fff"></div><div class="a" style="left:47px;top:339.94px;width:964.3px;height:17.52px;background:#ffffff;"></div><div class="a" style="left:47px;top:356.15999999999997px;width:964.3px;height:1.3px;background:#ededed;"></div><div class="t" style="left:49.7px;top:345px;font-size:8.333px;transform:scaleX(0.9);">08</div><div class="t" style="left:77.9px;top:345px;font-size:8.333px;transform:scaleX(0.9);">SW</div><div class="t" style="left:107.10000000000001px;top:345px;font-size:8.333px;transform:scaleX(0.9);">B01</div><svg class="a" style="left:135.9px;top:347.74px;" width="7" height="1.6" viewBox="0 0 7 1.6"><path d="M0 0H2V1.6H0ZM2.5 0H4.5V1.6H2.5ZM5 0H7V1.6H5Z" fill="#6a6a6a"/></svg><svg class="a" style="left:155.0px;top:344.54px;" width="6" height="8" viewBox="0 0 6 8"><path d="M0 0H3.4L6 2.6V8H0Z" fill="#555"/><path d="M3.9 0.2L5.8 2.1H3.9Z" fill="#fff" opacity="0.85"/></svg><div class="t" style="left:169.0px;top:345px;font-size:8.333px;transform:scaleX(0.9);color:#309830;-webkit-text-stroke:0.2px currentColor;">No</div><div class="t" style="left:221.1px;top:344px;font-size:8.333px;transform:scaleX(0.9);color:#f02525;-webkit-text-stroke:0.2px currentColor;">Yes</div><svg class="a" style="left:237.0px;top:346.74px;" width="7" height="2" viewBox="0 0 7 2"><circle cx="1" cy="1" r="0.9" fill="#444"/><circle cx="3.2" cy="1" r="0.9" fill="#444"/><circle cx="5.4" cy="1" r="0.9" fill="#444"/></svg><svg class="a" style="left:260.6px;top:345.34px;" width="6" height="8" viewBox="0 0 6 8"><path d="M0 0H3.4L6 2.6V8H0Z" fill="#555"/><path d="M3.9 0.2L5.8 2.1H3.9Z" fill="#fff" opacity="0.85"/></svg><div class="t" style="left:274.09999999999997px;top:345px;font-size:8.333px;transform:scaleX(0.9);color:#309830;-webkit-text-stroke:0.2px currentColor;">No</div><div class="t" style="left:319.3px;top:345px;font-size:8.333px;transform:scaleX(0.9);">-</div><div class="t" style="left:347.5px;top:345px;font-size:8.333px;transform:scaleX(0.9);">-</div><div class="t" style="left:557.6px;top:345px;font-size:8.333px;transform:scaleX(0.9);">-</div><div class="t" style="left:585.3000000000001px;top:345px;font-size:8.333px;transform:scaleX(0.9);">-</div><div class="t" style="left:795.5px;top:345px;font-size:8.333px;transform:scaleX(0.9);">141-ISO-8.1_48.3-10.1</div><div class="t" style="left:922.5px;top:345px;font-size:8.333px;transform:scaleX(0.9);">A</div><div class="a" style="left:934.4px;top:342.34px;width:17.1px;height:12.6px;border:1px solid #a6a6a6;border-radius:2.4px;background:linear-gradient(#fff,#ececec)"></div><svg class="a" style="left:939.4px;top:344.64px;" width="8.4" height="8.4" viewBox="0 0 8.4 8.4"><path d="M0.4 8L0.9 6.1L2.3 7.5Z" fill="#ff1a1a"/><path d="M1.5 5.5L5.6 1.4L7 2.8L2.9 6.9Z" fill="#ff1a1a"/><path d="M6.1 0.9L6.8 0.2Q7.2 -0.1 7.6 0.3L8.1 0.8Q8.5 1.2 8.2 1.6L7.5 2.3Z" fill="#ff1a1a"/></svg><div class="a" style="left:953.0px;top:342.34px;width:17.1px;height:12.6px;border:1px solid #a6a6a6;border-radius:2.4px;background:linear-gradient(#fff,#ececec)"></div><svg class="a" style="left:957.9px;top:343.54px;" width="7.6" height="8.6" viewBox="0 0 7.6 8.6"><path d="M0 1.1H7.6V2.1H0Z" fill="#f2897c"/><path d="M2.8 0H4.8V1.2H2.8Z" fill="#f2897c"/><path d="M1 2.4H6.6L6.1 8.6H1.5Z" fill="#f2897c"/><path d="M2.7 3.3V7.8M3.8 3.3V7.8M4.9 3.3V7.8" stroke="#f7b3aa" stroke-width="0.45"/></svg><div class="a" style="left:971.7px;top:342.34px;width:17.1px;height:12.6px;border:1px solid #a6a6a6;border-radius:2.4px;background:linear-gradient(#fff,#ececec)"></div><svg class="a" style="left:976.0px;top:344.54px;" width="8.6" height="7.6" viewBox="0 0 8.6 7.6"><path d="M7.1 4.3A3.2 3.2 0 1 1 5.6 1.1" stroke="#1a1a1a" stroke-width="1.5" fill="none"/><path d="M2.6 3.5L3.9 4.7L7.6 1.1" stroke="#1a1a1a" stroke-width="1.5" fill="none"/></svg><div class="a" style="left:992px;top:345.74px;width:6.8px;height:6.6px;border:1px solid #dedede;border-radius:1.4px;background:#fff"></div><div class="a" style="left:47px;top:357.46000000000004px;width:964.3px;height:17.52px;background:#f9f9f9;"></div><div class="a" style="left:47px;top:373.68px;width:964.3px;height:1.3px;background:#ededed;"></div><div class="t" style="left:49.7px;top:362px;font-size:8.333px;transform:scaleX(0.9);">09</div><div class="t" style="left:77.9px;top:362px;font-size:8.333px;transform:scaleX(0.9);">SW</div><div class="t" style="left:107.10000000000001px;top:362px;font-size:8.333px;transform:scaleX(0.9);">B01</div><svg class="a" style="left:135.9px;top:365.26000000000005px;" width="7" height="1.6" viewBox="0 0 7 1.6"><path d="M0 0H2V1.6H0ZM2.5 0H4.5V1.6H2.5ZM5 0H7V1.6H5Z" fill="#6a6a6a"/></svg><svg class="a" style="left:155.0px;top:362.06000000000006px;" width="6" height="8" viewBox="0 0 6 8"><path d="M0 0H3.4L6 2.6V8H0Z" fill="#555"/><path d="M3.9 0.2L5.8 2.1H3.9Z" fill="#fff" opacity="0.85"/></svg><div class="t" style="left:169.0px;top:362px;font-size:8.333px;transform:scaleX(0.9);color:#309830;-webkit-text-stroke:0.2px currentColor;">No</div><div class="t" style="left:221.1px;top:361px;font-size:8.333px;transform:scaleX(0.9);color:#f02525;-webkit-text-stroke:0.2px currentColor;">Yes</div><svg class="a" style="left:237.0px;top:364.26000000000005px;" width="7" height="2" viewBox="0 0 7 2"><circle cx="1" cy="1" r="0.9" fill="#444"/><circle cx="3.2" cy="1" r="0.9" fill="#444"/><circle cx="5.4" cy="1" r="0.9" fill="#444"/></svg><svg class="a" style="left:260.6px;top:362.86px;" width="6" height="8" viewBox="0 0 6 8"><path d="M0 0H3.4L6 2.6V8H0Z" fill="#555"/><path d="M3.9 0.2L5.8 2.1H3.9Z" fill="#fff" opacity="0.85"/></svg><div class="t" style="left:274.09999999999997px;top:362px;font-size:8.333px;transform:scaleX(0.9);color:#309830;-webkit-text-stroke:0.2px currentColor;">No</div><div class="t" style="left:319.3px;top:362px;font-size:8.333px;transform:scaleX(0.9);">-</div><div class="t" style="left:347.5px;top:362px;font-size:8.333px;transform:scaleX(0.9);">-</div><div class="t" style="left:557.6px;top:362px;font-size:8.333px;transform:scaleX(0.9);">-</div><div class="t" style="left:585.3000000000001px;top:362px;font-size:8.333px;transform:scaleX(0.9);">-</div><div class="t" style="left:795.5px;top:362px;font-size:8.333px;transform:scaleX(0.9);">141-111-ISO-1.2_114.3-11.9</div><div class="t" style="left:922.5px;top:362px;font-size:8.333px;transform:scaleX(0.9);">A</div><div class="a" style="left:934.4px;top:359.86px;width:17.1px;height:12.6px;border:1px solid #a6a6a6;border-radius:2.4px;background:linear-gradient(#fff,#ececec)"></div><svg class="a" style="left:939.4px;top:362.16px;" width="8.4" height="8.4" viewBox="0 0 8.4 8.4"><path d="M0.4 8L0.9 6.1L2.3 7.5Z" fill="#ff1a1a"/><path d="M1.5 5.5L5.6 1.4L7 2.8L2.9 6.9Z" fill="#ff1a1a"/><path d="M6.1 0.9L6.8 0.2Q7.2 -0.1 7.6 0.3L8.1 0.8Q8.5 1.2 8.2 1.6L7.5 2.3Z" fill="#ff1a1a"/></svg><div class="a" style="left:953.0px;top:359.86px;width:17.1px;height:12.6px;border:1px solid #a6a6a6;border-radius:2.4px;background:linear-gradient(#fff,#ececec)"></div><svg class="a" style="left:957.9px;top:361.06000000000006px;" width="7.6" height="8.6" viewBox="0 0 7.6 8.6"><path d="M0 1.1H7.6V2.1H0Z" fill="#f2897c"/><path d="M2.8 0H4.8V1.2H2.8Z" fill="#f2897c"/><path d="M1 2.4H6.6L6.1 8.6H1.5Z" fill="#f2897c"/><path d="M2.7 3.3V7.8M3.8 3.3V7.8M4.9 3.3V7.8" stroke="#f7b3aa" stroke-width="0.45"/></svg><div class="a" style="left:971.7px;top:359.86px;width:17.1px;height:12.6px;border:1px solid #a6a6a6;border-radius:2.4px;background:linear-gradient(#fff,#ececec)"></div><svg class="a" style="left:976.0px;top:362.06000000000006px;" width="8.6" height="7.6" viewBox="0 0 8.6 7.6"><path d="M7.1 4.3A3.2 3.2 0 1 1 5.6 1.1" stroke="#1a1a1a" stroke-width="1.5" fill="none"/><path d="M2.6 3.5L3.9 4.7L7.6 1.1" stroke="#1a1a1a" stroke-width="1.5" fill="none"/></svg><div class="a" style="left:992px;top:363.26000000000005px;width:6.8px;height:6.6px;border:1px solid #dedede;border-radius:1.4px;background:#fff"></div><div class="a" style="left:47px;top:374.98px;width:964.3px;height:17.52px;background:#ffffff;"></div><div class="a" style="left:47px;top:391.2px;width:964.3px;height:1.3px;background:#ededed;"></div><div class="t" style="left:49.7px;top:380px;font-size:8.333px;transform:scaleX(0.9);">10</div><div class="t" style="left:77.9px;top:380px;font-size:8.333px;transform:scaleX(0.9);">SW</div><div class="t" style="left:107.10000000000001px;top:380px;font-size:8.333px;transform:scaleX(0.9);">B03</div><svg class="a" style="left:135.9px;top:382.78000000000003px;" width="7" height="1.6" viewBox="0 0 7 1.6"><path d="M0 0H2V1.6H0ZM2.5 0H4.5V1.6H2.5ZM5 0H7V1.6H5Z" fill="#6a6a6a"/></svg><svg class="a" style="left:155.0px;top:379.58000000000004px;" width="6" height="8" viewBox="0 0 6 8"><path d="M0 0H3.4L6 2.6V8H0Z" fill="#555"/><path d="M3.9 0.2L5.8 2.1H3.9Z" fill="#fff" opacity="0.85"/></svg><div class="t" style="left:169.0px;top:380px;font-size:8.333px;transform:scaleX(0.9);color:#309830;-webkit-text-stroke:0.2px currentColor;">No</div><div class="t" style="left:221.1px;top:379px;font-size:8.333px;transform:scaleX(0.9);color:#309830;-webkit-text-stroke:0.2px currentColor;">Yes</div><svg class="a" style="left:237.79999999999998px;top:380.88px;" width="6.4" height="5" viewBox="0 0 6.4 5"><path d="M0.5 2.4L2.4 4.2L5.9 0.6" stroke="#111" stroke-width="1.5" fill="none"/></svg><svg class="a" style="left:260.6px;top:380.38px;" width="6" height="8" viewBox="0 0 6 8"><path d="M0 0H3.4L6 2.6V8H0Z" fill="#555"/><path d="M3.9 0.2L5.8 2.1H3.9Z" fill="#fff" opacity="0.85"/></svg><div class="t" style="left:274.09999999999997px;top:379px;font-size:8.333px;transform:scaleX(0.9);color:#309830;-webkit-text-stroke:0.2px currentColor;">Yes</div><svg class="a" style="left:305.7px;top:380.78000000000003px;" width="6" height="8" viewBox="0 0 6 8"><path d="M0 0H3.4L6 2.6V8H0Z" fill="#555"/><path d="M3.9 0.2L5.8 2.1H3.9Z" fill="#fff" opacity="0.85"/></svg><div class="t" style="left:319.3px;top:380px;font-size:8.333px;transform:scaleX(0.9);">0005</div><div class="t" style="left:347.5px;top:380px;font-size:8.333px;transform:scaleX(0.9);">121213</div><div class="t" style="left:391.0px;top:380px;font-size:8.333px;transform:scaleX(0.9);">6&quot;/40/7,3/A106 Gr B/Pipe</div><div class="t" style="left:557.6px;top:380px;font-size:8.333px;transform:scaleX(0.9);">0005</div><div class="t" style="left:585.3000000000001px;top:380px;font-size:8.333px;transform:scaleX(0.9);">121213</div><div class="t" style="left:629.2px;top:380px;font-size:8.333px;transform:scaleX(0.9);">6&quot;/40/7,3/A106 Gr B/Pipe</div><div class="t" style="left:795.5px;top:380px;font-size:8.333px;transform:scaleX(0.9);">141-ISO-1.2_21.3-2.7</div><div class="t" style="left:922.5px;top:380px;font-size:8.333px;transform:scaleX(0.9);">A</div><div class="a" style="left:934.4px;top:377.38px;width:17.1px;height:12.6px;border:1px solid #a6a6a6;border-radius:2.4px;background:linear-gradient(#fff,#ececec)"></div><svg class="a" style="left:939.4px;top:379.68px;" width="8.4" height="8.4" viewBox="0 0 8.4 8.4"><path d="M0.4 8L0.9 6.1L2.3 7.5Z" fill="#ff1a1a"/><path d="M1.5 5.5L5.6 1.4L7 2.8L2.9 6.9Z" fill="#ff1a1a"/><path d="M6.1 0.9L6.8 0.2Q7.2 -0.1 7.6 0.3L8.1 0.8Q8.5 1.2 8.2 1.6L7.5 2.3Z" fill="#ff1a1a"/></svg><div class="a" style="left:953.0px;top:377.38px;width:17.1px;height:12.6px;border:1px solid #a6a6a6;border-radius:2.4px;background:linear-gradient(#fff,#ececec)"></div><svg class="a" style="left:957.9px;top:378.58000000000004px;" width="7.6" height="8.6" viewBox="0 0 7.6 8.6"><path d="M0 1.1H7.6V2.1H0Z" fill="#f2897c"/><path d="M2.8 0H4.8V1.2H2.8Z" fill="#f2897c"/><path d="M1 2.4H6.6L6.1 8.6H1.5Z" fill="#f2897c"/><path d="M2.7 3.3V7.8M3.8 3.3V7.8M4.9 3.3V7.8" stroke="#f7b3aa" stroke-width="0.45"/></svg><div class="a" style="left:971.7px;top:377.38px;width:17.1px;height:12.6px;border:1px solid #a6a6a6;border-radius:2.4px;background:linear-gradient(#fff,#ececec)"></div><svg class="a" style="left:976.0px;top:379.58000000000004px;" width="8.6" height="7.6" viewBox="0 0 8.6 7.6"><path d="M7.1 4.3A3.2 3.2 0 1 1 5.6 1.1" stroke="#1a1a1a" stroke-width="1.5" fill="none"/><path d="M2.6 3.5L3.9 4.7L7.6 1.1" stroke="#1a1a1a" stroke-width="1.5" fill="none"/></svg><div class="a" style="left:992px;top:380.78000000000003px;width:6.8px;height:6.6px;border:1px solid #dedede;border-radius:1.4px;background:#fff"></div><div class="a" style="left:47px;top:392.5px;width:964.3px;height:17.52px;background:#f9f9f9;"></div><div class="a" style="left:47px;top:408.71999999999997px;width:964.3px;height:1.3px;background:#ededed;"></div><div class="t" style="left:49.7px;top:397px;font-size:8.333px;transform:scaleX(0.9);">11</div><div class="t" style="left:77.9px;top:397px;font-size:8.333px;transform:scaleX(0.9);">SW</div><div class="t" style="left:107.10000000000001px;top:397px;font-size:8.333px;transform:scaleX(0.9);">NVT</div><svg class="a" style="left:135.9px;top:400.3px;" width="7" height="1.6" viewBox="0 0 7 1.6"><path d="M0 0H2V1.6H0ZM2.5 0H4.5V1.6H2.5ZM5 0H7V1.6H5Z" fill="#6a6a6a"/></svg><svg class="a" style="left:155.0px;top:397.1px;" width="6" height="8" viewBox="0 0 6 8"><path d="M0 0H3.4L6 2.6V8H0Z" fill="#555"/><path d="M3.9 0.2L5.8 2.1H3.9Z" fill="#fff" opacity="0.85"/></svg><div class="t" style="left:169.0px;top:396px;font-size:8.333px;transform:scaleX(0.9);color:#f02525;-webkit-text-stroke:0.2px currentColor;">Yes</div><svg class="a" style="left:184.5px;top:399.3px;" width="7" height="2" viewBox="0 0 7 2"><circle cx="1" cy="1" r="0.9" fill="#444"/><circle cx="3.2" cy="1" r="0.9" fill="#444"/><circle cx="5.4" cy="1" r="0.9" fill="#444"/></svg><svg class="a" style="left:208.10000000000002px;top:397.7px;" width="6" height="8" viewBox="0 0 6 8"><path d="M0 0H3.4L6 2.6V8H0Z" fill="#555"/><path d="M3.9 0.2L5.8 2.1H3.9Z" fill="#fff" opacity="0.85"/></svg><div class="t" style="left:221.1px;top:396px;font-size:8.333px;transform:scaleX(0.9);color:#f02525;-webkit-text-stroke:0.2px currentColor;">Yes</div><svg class="a" style="left:237.0px;top:399.3px;" width="7" height="2" viewBox="0 0 7 2"><circle cx="1" cy="1" r="0.9" fill="#444"/><circle cx="3.2" cy="1" r="0.9" fill="#444"/><circle cx="5.4" cy="1" r="0.9" fill="#444"/></svg><svg class="a" style="left:260.6px;top:397.9px;" width="6" height="8" viewBox="0 0 6 8"><path d="M0 0H3.4L6 2.6V8H0Z" fill="#555"/><path d="M3.9 0.2L5.8 2.1H3.9Z" fill="#fff" opacity="0.85"/></svg><div class="t" style="left:274.09999999999997px;top:397px;font-size:8.333px;transform:scaleX(0.9);color:#309830;-webkit-text-stroke:0.2px currentColor;">No</div><div class="t" style="left:319.3px;top:397px;font-size:8.333px;transform:scaleX(0.9);">0003</div><div class="t" style="left:347.5px;top:397px;font-size:8.333px;transform:scaleX(0.9);">121212</div><div class="t" style="left:391.0px;top:397px;font-size:8.333px;transform:scaleX(0.9);">3/4&quot;/STD//A234 Gr WPB/Pipe</div><div class="t" style="left:557.6px;top:397px;font-size:8.333px;transform:scaleX(0.9);">0003</div><div class="t" style="left:585.3000000000001px;top:397px;font-size:8.333px;transform:scaleX(0.9);">121212</div><div class="t" style="left:629.2px;top:397px;font-size:8.333px;transform:scaleX(0.9);">3/4&quot;/STD//A234 Gr WPB/Pipe</div><div class="t" style="left:795.5px;top:397px;font-size:8.333px;transform:scaleX(0.9);">141-ISO-1.2_21.3-2.7</div><div class="t" style="left:922.5px;top:397px;font-size:8.333px;transform:scaleX(0.9);">-</div><div class="a" style="left:934.4px;top:394.9px;width:17.1px;height:12.6px;border:1px solid #a6a6a6;border-radius:2.4px;background:linear-gradient(#fff,#ececec)"></div><svg class="a" style="left:939.4px;top:397.2px;" width="8.4" height="8.4" viewBox="0 0 8.4 8.4"><path d="M0.4 8L0.9 6.1L2.3 7.5Z" fill="#ff1a1a"/><path d="M1.5 5.5L5.6 1.4L7 2.8L2.9 6.9Z" fill="#ff1a1a"/><path d="M6.1 0.9L6.8 0.2Q7.2 -0.1 7.6 0.3L8.1 0.8Q8.5 1.2 8.2 1.6L7.5 2.3Z" fill="#ff1a1a"/></svg><div class="a" style="left:953.0px;top:394.9px;width:17.1px;height:12.6px;border:1px solid #a6a6a6;border-radius:2.4px;background:linear-gradient(#fff,#ececec)"></div><svg class="a" style="left:957.9px;top:396.1px;" width="7.6" height="8.6" viewBox="0 0 7.6 8.6"><path d="M0 1.1H7.6V2.1H0Z" fill="#f2897c"/><path d="M2.8 0H4.8V1.2H2.8Z" fill="#f2897c"/><path d="M1 2.4H6.6L6.1 8.6H1.5Z" fill="#f2897c"/><path d="M2.7 3.3V7.8M3.8 3.3V7.8M4.9 3.3V7.8" stroke="#f7b3aa" stroke-width="0.45"/></svg><div class="a" style="left:971.7px;top:394.9px;width:17.1px;height:12.6px;border:1px solid #a6a6a6;border-radius:2.4px;background:linear-gradient(#fff,#ececec)"></div><svg class="a" style="left:976.0px;top:397.1px;" width="8.6" height="7.6" viewBox="0 0 8.6 7.6"><path d="M7.1 4.3A3.2 3.2 0 1 1 5.6 1.1" stroke="#1a1a1a" stroke-width="1.5" fill="none"/><path d="M2.6 3.5L3.9 4.7L7.6 1.1" stroke="#1a1a1a" stroke-width="1.5" fill="none"/></svg><div class="a" style="left:992px;top:398.3px;width:6.8px;height:6.6px;border:1px solid #dedede;border-radius:1.4px;background:#fff"></div><div class="a" style="left:47px;top:410.02px;width:964.3px;height:17.52px;background:#ffffff;"></div><div class="a" style="left:47px;top:426.23999999999995px;width:964.3px;height:1.3px;background:#ededed;"></div><div class="t" style="left:49.7px;top:415px;font-size:8.333px;transform:scaleX(0.9);">12</div><div class="t" style="left:77.9px;top:415px;font-size:8.333px;transform:scaleX(0.9);">SW</div><div class="t" style="left:107.10000000000001px;top:415px;font-size:8.333px;transform:scaleX(0.9);">NVT</div><svg class="a" style="left:135.9px;top:417.82px;" width="7" height="1.6" viewBox="0 0 7 1.6"><path d="M0 0H2V1.6H0ZM2.5 0H4.5V1.6H2.5ZM5 0H7V1.6H5Z" fill="#6a6a6a"/></svg><svg class="a" style="left:155.0px;top:414.62px;" width="6" height="8" viewBox="0 0 6 8"><path d="M0 0H3.4L6 2.6V8H0Z" fill="#555"/><path d="M3.9 0.2L5.8 2.1H3.9Z" fill="#fff" opacity="0.85"/></svg><div class="t" style="left:169.0px;top:415px;font-size:8.333px;transform:scaleX(0.9);color:#309830;-webkit-text-stroke:0.2px currentColor;">No</div><div class="t" style="left:221.1px;top:414px;font-size:8.333px;transform:scaleX(0.9);color:#f02525;-webkit-text-stroke:0.2px currentColor;">Yes</div><svg class="a" style="left:237.0px;top:416.82px;" width="7" height="2" viewBox="0 0 7 2"><circle cx="1" cy="1" r="0.9" fill="#444"/><circle cx="3.2" cy="1" r="0.9" fill="#444"/><circle cx="5.4" cy="1" r="0.9" fill="#444"/></svg><svg class="a" style="left:260.6px;top:415.41999999999996px;" width="6" height="8" viewBox="0 0 6 8"><path d="M0 0H3.4L6 2.6V8H0Z" fill="#555"/><path d="M3.9 0.2L5.8 2.1H3.9Z" fill="#fff" opacity="0.85"/></svg><div class="t" style="left:274.09999999999997px;top:415px;font-size:8.333px;transform:scaleX(0.9);color:#309830;-webkit-text-stroke:0.2px currentColor;">No</div><div class="t" style="left:319.3px;top:415px;font-size:8.333px;transform:scaleX(0.9);">0003</div><div class="t" style="left:347.5px;top:415px;font-size:8.333px;transform:scaleX(0.9);">121212</div><div class="t" style="left:391.0px;top:415px;font-size:8.333px;transform:scaleX(0.9);">3/4&quot;/STD//A234 Gr WPB/Pipe</div><div class="t" style="left:557.6px;top:415px;font-size:8.333px;transform:scaleX(0.9);">0003</div><div class="t" style="left:585.3000000000001px;top:415px;font-size:8.333px;transform:scaleX(0.9);">121212</div><div class="t" style="left:629.2px;top:415px;font-size:8.333px;transform:scaleX(0.9);">3/4&quot;/STD//A234 Gr WPB/Pipe</div><div class="t" style="left:795.5px;top:415px;font-size:8.333px;transform:scaleX(0.9);">141-ISO-1.2_21.3-2.7</div><div class="t" style="left:922.5px;top:415px;font-size:8.333px;transform:scaleX(0.9);">A</div><div class="a" style="left:934.4px;top:412.41999999999996px;width:17.1px;height:12.6px;border:1px solid #a6a6a6;border-radius:2.4px;background:linear-gradient(#fff,#ececec)"></div><svg class="a" style="left:939.4px;top:414.71999999999997px;" width="8.4" height="8.4" viewBox="0 0 8.4 8.4"><path d="M0.4 8L0.9 6.1L2.3 7.5Z" fill="#ff1a1a"/><path d="M1.5 5.5L5.6 1.4L7 2.8L2.9 6.9Z" fill="#ff1a1a"/><path d="M6.1 0.9L6.8 0.2Q7.2 -0.1 7.6 0.3L8.1 0.8Q8.5 1.2 8.2 1.6L7.5 2.3Z" fill="#ff1a1a"/></svg><div class="a" style="left:953.0px;top:412.41999999999996px;width:17.1px;height:12.6px;border:1px solid #a6a6a6;border-radius:2.4px;background:linear-gradient(#fff,#ececec)"></div><svg class="a" style="left:957.9px;top:413.62px;" width="7.6" height="8.6" viewBox="0 0 7.6 8.6"><path d="M0 1.1H7.6V2.1H0Z" fill="#f2897c"/><path d="M2.8 0H4.8V1.2H2.8Z" fill="#f2897c"/><path d="M1 2.4H6.6L6.1 8.6H1.5Z" fill="#f2897c"/><path d="M2.7 3.3V7.8M3.8 3.3V7.8M4.9 3.3V7.8" stroke="#f7b3aa" stroke-width="0.45"/></svg><div class="a" style="left:971.7px;top:412.41999999999996px;width:17.1px;height:12.6px;border:1px solid #a6a6a6;border-radius:2.4px;background:linear-gradient(#fff,#ececec)"></div><svg class="a" style="left:976.0px;top:414.62px;" width="8.6" height="7.6" viewBox="0 0 8.6 7.6"><path d="M7.1 4.3A3.2 3.2 0 1 1 5.6 1.1" stroke="#1a1a1a" stroke-width="1.5" fill="none"/><path d="M2.6 3.5L3.9 4.7L7.6 1.1" stroke="#1a1a1a" stroke-width="1.5" fill="none"/></svg><div class="a" style="left:992px;top:415.82px;width:6.8px;height:6.6px;border:1px solid #dedede;border-radius:1.4px;background:#fff"></div><div class="a" style="left:47px;top:427.54px;width:964.3px;height:17.52px;background:#f9f9f9;"></div><div class="a" style="left:47px;top:443.76px;width:964.3px;height:1.3px;background:#ededed;"></div><div class="t" style="left:49.7px;top:432px;font-size:8.333px;transform:scaleX(0.9);">13</div><div class="t" style="left:77.9px;top:432px;font-size:8.333px;transform:scaleX(0.9);">SW</div><div class="t" style="left:107.10000000000001px;top:432px;font-size:8.333px;transform:scaleX(0.9);">019</div><svg class="a" style="left:135.9px;top:435.34000000000003px;" width="7" height="1.6" viewBox="0 0 7 1.6"><path d="M0 0H2V1.6H0ZM2.5 0H4.5V1.6H2.5ZM5 0H7V1.6H5Z" fill="#6a6a6a"/></svg><svg class="a" style="left:155.0px;top:432.14000000000004px;" width="6" height="8" viewBox="0 0 6 8"><path d="M0 0H3.4L6 2.6V8H0Z" fill="#555"/><path d="M3.9 0.2L5.8 2.1H3.9Z" fill="#fff" opacity="0.85"/></svg><div class="t" style="left:169.0px;top:432px;font-size:8.333px;transform:scaleX(0.9);color:#309830;-webkit-text-stroke:0.2px currentColor;">No</div><div class="t" style="left:221.9px;top:432px;font-size:8.333px;transform:scaleX(0.9);color:#309830;-webkit-text-stroke:0.2px currentColor;">No</div><div class="t" style="left:274.09999999999997px;top:432px;font-size:8.333px;transform:scaleX(0.9);color:#309830;-webkit-text-stroke:0.2px currentColor;">No</div><div class="t" style="left:319.3px;top:432px;font-size:8.333px;transform:scaleX(0.9);">0003</div><div class="t" style="left:347.5px;top:432px;font-size:8.333px;transform:scaleX(0.9);">121212</div><div class="t" style="left:391.0px;top:432px;font-size:8.333px;transform:scaleX(0.9);">3/4&quot;/STD//A234 Gr WPB/Pipe</div><div class="t" style="left:557.6px;top:432px;font-size:8.333px;transform:scaleX(0.9);">0003</div><div class="t" style="left:585.3000000000001px;top:432px;font-size:8.333px;transform:scaleX(0.9);">121212</div><div class="t" style="left:629.2px;top:432px;font-size:8.333px;transform:scaleX(0.9);">3/4&quot;/STD//A234 Gr WPB/Pipe</div><div class="t" style="left:795.5px;top:432px;font-size:8.333px;transform:scaleX(0.9);">141-ISO-1.2_21.3-2.7</div><div class="t" style="left:922.5px;top:432px;font-size:8.333px;transform:scaleX(0.9);">A</div><div class="a" style="left:934.4px;top:429.94px;width:17.1px;height:12.6px;border:1px solid #a6a6a6;border-radius:2.4px;background:linear-gradient(#fff,#ececec)"></div><svg class="a" style="left:939.4px;top:432.24px;" width="8.4" height="8.4" viewBox="0 0 8.4 8.4"><path d="M0.4 8L0.9 6.1L2.3 7.5Z" fill="#111"/><path d="M1.5 5.5L5.6 1.4L7 2.8L2.9 6.9Z" fill="#111"/><path d="M6.1 0.9L6.8 0.2Q7.2 -0.1 7.6 0.3L8.1 0.8Q8.5 1.2 8.2 1.6L7.5 2.3Z" fill="#111"/></svg><div class="a" style="left:953.0px;top:429.94px;width:17.1px;height:12.6px;border:1px solid #a6a6a6;border-radius:2.4px;background:linear-gradient(#fff,#ececec)"></div><svg class="a" style="left:957.9px;top:431.14000000000004px;" width="7.6" height="8.6" viewBox="0 0 7.6 8.6"><path d="M0 1.1H7.6V2.1H0Z" fill="#f2897c"/><path d="M2.8 0H4.8V1.2H2.8Z" fill="#f2897c"/><path d="M1 2.4H6.6L6.1 8.6H1.5Z" fill="#f2897c"/><path d="M2.7 3.3V7.8M3.8 3.3V7.8M4.9 3.3V7.8" stroke="#f7b3aa" stroke-width="0.45"/></svg><div class="a" style="left:971.7px;top:429.94px;width:17.1px;height:12.6px;border:1px solid #a6a6a6;border-radius:2.4px;background:linear-gradient(#fff,#ececec)"></div><svg class="a" style="left:976.0px;top:432.14000000000004px;" width="8.6" height="7.6" viewBox="0 0 8.6 7.6"><path d="M7.1 4.3A3.2 3.2 0 1 1 5.6 1.1" stroke="#1a1a1a" stroke-width="1.5" fill="none"/><path d="M2.6 3.5L3.9 4.7L7.6 1.1" stroke="#1a1a1a" stroke-width="1.5" fill="none"/></svg><div class="a" style="left:992px;top:433.34000000000003px;width:6.8px;height:6.6px;border:1px solid #dedede;border-radius:1.4px;background:#fff"></div><div class="a" style="left:47px;top:445.06px;width:964.3px;height:17.52px;background:#ffffff;"></div><div class="a" style="left:47px;top:461.28px;width:964.3px;height:1.3px;background:#ededed;"></div><div class="t" style="left:49.7px;top:450px;font-size:8.333px;transform:scaleX(0.9);">14</div><div class="t" style="left:77.9px;top:450px;font-size:8.333px;transform:scaleX(0.9);">SW</div><div class="t" style="left:107.10000000000001px;top:450px;font-size:8.333px;transform:scaleX(0.9);">------</div><svg class="a" style="left:135.9px;top:452.86px;" width="7" height="1.6" viewBox="0 0 7 1.6"><path d="M0 0H2V1.6H0ZM2.5 0H4.5V1.6H2.5ZM5 0H7V1.6H5Z" fill="#6a6a6a"/></svg><svg class="a" style="left:155.0px;top:449.66px;" width="6" height="8" viewBox="0 0 6 8"><path d="M0 0H3.4L6 2.6V8H0Z" fill="#555"/><path d="M3.9 0.2L5.8 2.1H3.9Z" fill="#fff" opacity="0.85"/></svg><div class="t" style="left:169.0px;top:450px;font-size:8.333px;transform:scaleX(0.9);color:#309830;-webkit-text-stroke:0.2px currentColor;">No</div><div class="t" style="left:221.9px;top:450px;font-size:8.333px;transform:scaleX(0.9);color:#309830;-webkit-text-stroke:0.2px currentColor;">No</div><div class="t" style="left:274.09999999999997px;top:450px;font-size:8.333px;transform:scaleX(0.9);color:#309830;-webkit-text-stroke:0.2px currentColor;">No</div><div class="t" style="left:319.3px;top:450px;font-size:8.333px;transform:scaleX(0.9);">0005</div><div class="t" style="left:347.5px;top:450px;font-size:8.333px;transform:scaleX(0.9);">121213</div><div class="t" style="left:391.0px;top:450px;font-size:8.333px;transform:scaleX(0.9);">6&quot;/40/7,3/A106 Gr B/Pipe</div><div class="t" style="left:557.6px;top:450px;font-size:8.333px;transform:scaleX(0.9);">0007</div><div class="t" style="left:585.3000000000001px;top:450px;font-size:8.333px;transform:scaleX(0.9);">23451</div><div class="t" style="left:629.2px;top:450px;font-size:8.333px;transform:scaleX(0.9);">4&quot;/10/3/A312 RVS316L/Pipe</div><div class="t" style="left:795.5px;top:450px;font-size:8.333px;transform:scaleX(0.9);">141-ISO-1.2_21.3-2.7</div><div class="t" style="left:922.5px;top:450px;font-size:8.333px;transform:scaleX(0.9);">-</div><div class="a" style="left:934.4px;top:447.46px;width:17.1px;height:12.6px;border:1px solid #a6a6a6;border-radius:2.4px;background:linear-gradient(#fff,#ececec)"></div><svg class="a" style="left:939.4px;top:449.76px;" width="8.4" height="8.4" viewBox="0 0 8.4 8.4"><path d="M0.4 8L0.9 6.1L2.3 7.5Z" fill="#111"/><path d="M1.5 5.5L5.6 1.4L7 2.8L2.9 6.9Z" fill="#111"/><path d="M6.1 0.9L6.8 0.2Q7.2 -0.1 7.6 0.3L8.1 0.8Q8.5 1.2 8.2 1.6L7.5 2.3Z" fill="#111"/></svg><div class="a" style="left:953.0px;top:447.46px;width:17.1px;height:12.6px;border:1px solid #a6a6a6;border-radius:2.4px;background:linear-gradient(#fff,#ececec)"></div><svg class="a" style="left:957.9px;top:448.66px;" width="7.6" height="8.6" viewBox="0 0 7.6 8.6"><path d="M0 1.1H7.6V2.1H0Z" fill="#f2897c"/><path d="M2.8 0H4.8V1.2H2.8Z" fill="#f2897c"/><path d="M1 2.4H6.6L6.1 8.6H1.5Z" fill="#f2897c"/><path d="M2.7 3.3V7.8M3.8 3.3V7.8M4.9 3.3V7.8" stroke="#f7b3aa" stroke-width="0.45"/></svg><div class="a" style="left:971.7px;top:447.46px;width:17.1px;height:12.6px;border:1px solid #a6a6a6;border-radius:2.4px;background:linear-gradient(#fff,#ececec)"></div><svg class="a" style="left:976.0px;top:449.66px;" width="8.6" height="7.6" viewBox="0 0 8.6 7.6"><path d="M7.1 4.3A3.2 3.2 0 1 1 5.6 1.1" stroke="#1a1a1a" stroke-width="1.5" fill="none"/><path d="M2.6 3.5L3.9 4.7L7.6 1.1" stroke="#1a1a1a" stroke-width="1.5" fill="none"/></svg><div class="a" style="left:992px;top:450.86px;width:6.8px;height:6.6px;border:1px solid #dedede;border-radius:1.4px;background:#fff"></div><div class="a" style="left:47px;top:462.58000000000004px;width:964.3px;height:17.52px;background:#f9f9f9;"></div><div class="a" style="left:47px;top:478.8px;width:964.3px;height:1.3px;background:#ededed;"></div><div class="t" style="left:49.7px;top:467px;font-size:8.333px;transform:scaleX(0.9);">15</div><div class="t" style="left:77.9px;top:467px;font-size:8.333px;transform:scaleX(0.9);">FW</div><div class="t" style="left:107.10000000000001px;top:467px;font-size:8.333px;transform:scaleX(0.9);">390</div><div class="t" style="left:169.0px;top:466px;font-size:8.333px;transform:scaleX(0.9);color:#f02525;-webkit-text-stroke:0.2px currentColor;">Yes</div><svg class="a" style="left:184.5px;top:469.38000000000005px;" width="7" height="2" viewBox="0 0 7 2"><circle cx="1" cy="1" r="0.9" fill="#444"/><circle cx="3.2" cy="1" r="0.9" fill="#444"/><circle cx="5.4" cy="1" r="0.9" fill="#444"/></svg><svg class="a" style="left:206.9px;top:467.98px;" width="8.2" height="7.6" viewBox="0 0 8.2 7.6"><rect x="1.8" y="0" width="4.6" height="2.2" fill="#555"/><rect x="0" y="2.6" width="8.2" height="3.4" rx="0.8" fill="#555"/><rect x="1.6" y="4.6" width="5" height="3" fill="#555"/><rect x="2.3" y="5.2" width="3.6" height="1.8" fill="#eee"/></svg><div class="t" style="left:221.1px;top:466px;font-size:8.333px;transform:scaleX(0.9);color:#f02525;-webkit-text-stroke:0.2px currentColor;">Yes</div><svg class="a" style="left:237.0px;top:469.38000000000005px;" width="7" height="2" viewBox="0 0 7 2"><circle cx="1" cy="1" r="0.9" fill="#444"/><circle cx="3.2" cy="1" r="0.9" fill="#444"/><circle cx="5.4" cy="1" r="0.9" fill="#444"/></svg><svg class="a" style="left:260.6px;top:467.98px;" width="6" height="8" viewBox="0 0 6 8"><path d="M0 0H3.4L6 2.6V8H0Z" fill="#555"/><path d="M3.9 0.2L5.8 2.1H3.9Z" fill="#fff" opacity="0.85"/></svg><div class="t" style="left:274.09999999999997px;top:467px;font-size:8.333px;transform:scaleX(0.9);color:#309830;-webkit-text-stroke:0.2px currentColor;">No</div><div class="t" style="left:319.3px;top:467px;font-size:8.333px;transform:scaleX(0.9);">0011</div><div class="t" style="left:347.5px;top:467px;font-size:8.333px;transform:scaleX(0.9);">QZ694</div><div class="t" style="left:391.0px;top:467px;font-size:8.333px;transform:scaleX(0.9);">1.1/2&quot;/XXS/4.15/A312 RVS316L/Pipe</div><div class="t" style="left:557.6px;top:467px;font-size:8.333px;transform:scaleX(0.9);">0011</div><div class="t" style="left:585.3000000000001px;top:467px;font-size:8.333px;transform:scaleX(0.9);">QZ694</div><div class="t" style="left:629.2px;top:467px;font-size:8.333px;transform:scaleX(0.9);">1.1/2&quot;/XXS/4.15/A312 RVS316L/Pipe</div><div class="t" style="left:795.5px;top:467px;font-size:8.333px;transform:scaleX(0.9);">141-ISO-1.2_21.3-2.7</div><div class="t" style="left:922.5px;top:467px;font-size:8.333px;transform:scaleX(0.9);">-</div><div class="a" style="left:934.4px;top:464.98px;width:17.1px;height:12.6px;border:1px solid #a6a6a6;border-radius:2.4px;background:linear-gradient(#fff,#ececec)"></div><svg class="a" style="left:939.4px;top:467.28000000000003px;" width="8.4" height="8.4" viewBox="0 0 8.4 8.4"><path d="M0.4 8L0.9 6.1L2.3 7.5Z" fill="#ff1a1a"/><path d="M1.5 5.5L5.6 1.4L7 2.8L2.9 6.9Z" fill="#ff1a1a"/><path d="M6.1 0.9L6.8 0.2Q7.2 -0.1 7.6 0.3L8.1 0.8Q8.5 1.2 8.2 1.6L7.5 2.3Z" fill="#ff1a1a"/></svg><div class="a" style="left:953.0px;top:464.98px;width:17.1px;height:12.6px;border:1px solid #a6a6a6;border-radius:2.4px;background:linear-gradient(#fff,#ececec)"></div><svg class="a" style="left:957.9px;top:466.18000000000006px;" width="7.6" height="8.6" viewBox="0 0 7.6 8.6"><path d="M0 1.1H7.6V2.1H0Z" fill="#f2897c"/><path d="M2.8 0H4.8V1.2H2.8Z" fill="#f2897c"/><path d="M1 2.4H6.6L6.1 8.6H1.5Z" fill="#f2897c"/><path d="M2.7 3.3V7.8M3.8 3.3V7.8M4.9 3.3V7.8" stroke="#f7b3aa" stroke-width="0.45"/></svg><div class="a" style="left:971.7px;top:464.98px;width:17.1px;height:12.6px;border:1px solid #a6a6a6;border-radius:2.4px;background:linear-gradient(#fff,#ececec)"></div><svg class="a" style="left:976.0px;top:467.18000000000006px;" width="8.6" height="7.6" viewBox="0 0 8.6 7.6"><path d="M7.1 4.3A3.2 3.2 0 1 1 5.6 1.1" stroke="#1a1a1a" stroke-width="1.5" fill="none"/><path d="M2.6 3.5L3.9 4.7L7.6 1.1" stroke="#1a1a1a" stroke-width="1.5" fill="none"/></svg><div class="a" style="left:992px;top:468.38000000000005px;width:6.8px;height:6.6px;border:1px solid #dedede;border-radius:1.4px;background:#fff"></div><div class="a" style="left:47px;top:480.1px;width:964.3px;height:17.52px;background:#ffffff;"></div><div class="a" style="left:47px;top:496.32px;width:964.3px;height:1.3px;background:#ededed;"></div><div class="t" style="left:49.7px;top:485px;font-size:8.333px;transform:scaleX(0.9);">20</div><div class="t" style="left:77.9px;top:485px;font-size:8.333px;transform:scaleX(0.9);">SW</div><div class="t" style="left:107.10000000000001px;top:485px;font-size:8.333px;transform:scaleX(0.9);">019</div><svg class="a" style="left:135.9px;top:487.90000000000003px;" width="7" height="1.6" viewBox="0 0 7 1.6"><path d="M0 0H2V1.6H0ZM2.5 0H4.5V1.6H2.5ZM5 0H7V1.6H5Z" fill="#6a6a6a"/></svg><svg class="a" style="left:155.0px;top:484.70000000000005px;" width="6" height="8" viewBox="0 0 6 8"><path d="M0 0H3.4L6 2.6V8H0Z" fill="#555"/><path d="M3.9 0.2L5.8 2.1H3.9Z" fill="#fff" opacity="0.85"/></svg><div class="t" style="left:169.0px;top:485px;font-size:8.333px;transform:scaleX(0.9);color:#309830;-webkit-text-stroke:0.2px currentColor;">No</div><div class="t" style="left:221.1px;top:484px;font-size:8.333px;transform:scaleX(0.9);color:#309830;-webkit-text-stroke:0.2px currentColor;">Yes</div><svg class="a" style="left:238.0px;top:486.3px;" width="5" height="5" viewBox="0 0 5 5"><path d="M0.6 0.6L4.4 4.4M4.4 0.6L0.6 4.4" stroke="#111" stroke-width="1.5"/></svg><svg class="a" style="left:260.6px;top:485.5px;" width="6" height="8" viewBox="0 0 6 8"><path d="M0 0H3.4L6 2.6V8H0Z" fill="#555"/><path d="M3.9 0.2L5.8 2.1H3.9Z" fill="#fff" opacity="0.85"/></svg><div class="t" style="left:274.09999999999997px;top:485px;font-size:8.333px;transform:scaleX(0.9);color:#309830;-webkit-text-stroke:0.2px currentColor;">No</div><div class="t" style="left:319.3px;top:485px;font-size:8.333px;transform:scaleX(0.9);">0005</div><div class="t" style="left:347.5px;top:485px;font-size:8.333px;transform:scaleX(0.9);">121213</div><div class="t" style="left:391.0px;top:485px;font-size:8.333px;transform:scaleX(0.9);">6&quot;/40/7,3/A106 Gr B/Pipe</div><div class="t" style="left:557.6px;top:485px;font-size:8.333px;transform:scaleX(0.9);">0005</div><div class="t" style="left:585.3000000000001px;top:485px;font-size:8.333px;transform:scaleX(0.9);">121213</div><div class="t" style="left:629.2px;top:485px;font-size:8.333px;transform:scaleX(0.9);">6&quot;/40/7,3/A106 Gr B/Pipe</div><div class="t" style="left:795.5px;top:485px;font-size:8.333px;transform:scaleX(0.9);">141-ISO-1.2_21.3-2.7</div><div class="t" style="left:922.5px;top:485px;font-size:8.333px;transform:scaleX(0.9);">A</div><div class="a" style="left:934.4px;top:482.5px;width:17.1px;height:12.6px;border:1px solid #a6a6a6;border-radius:2.4px;background:linear-gradient(#fff,#ececec)"></div><svg class="a" style="left:939.4px;top:484.8px;" width="8.4" height="8.4" viewBox="0 0 8.4 8.4"><path d="M0.4 8L0.9 6.1L2.3 7.5Z" fill="#ff1a1a"/><path d="M1.5 5.5L5.6 1.4L7 2.8L2.9 6.9Z" fill="#ff1a1a"/><path d="M6.1 0.9L6.8 0.2Q7.2 -0.1 7.6 0.3L8.1 0.8Q8.5 1.2 8.2 1.6L7.5 2.3Z" fill="#ff1a1a"/></svg><div class="a" style="left:953.0px;top:482.5px;width:17.1px;height:12.6px;border:1px solid #a6a6a6;border-radius:2.4px;background:linear-gradient(#fff,#ececec)"></div><svg class="a" style="left:957.9px;top:483.70000000000005px;" width="7.6" height="8.6" viewBox="0 0 7.6 8.6"><path d="M0 1.1H7.6V2.1H0Z" fill="#f2897c"/><path d="M2.8 0H4.8V1.2H2.8Z" fill="#f2897c"/><path d="M1 2.4H6.6L6.1 8.6H1.5Z" fill="#f2897c"/><path d="M2.7 3.3V7.8M3.8 3.3V7.8M4.9 3.3V7.8" stroke="#f7b3aa" stroke-width="0.45"/></svg><div class="a" style="left:971.7px;top:482.5px;width:17.1px;height:12.6px;border:1px solid #a6a6a6;border-radius:2.4px;background:linear-gradient(#fff,#ececec)"></div><svg class="a" style="left:976.0px;top:484.70000000000005px;" width="8.6" height="7.6" viewBox="0 0 8.6 7.6"><path d="M7.1 4.3A3.2 3.2 0 1 1 5.6 1.1" stroke="#1a1a1a" stroke-width="1.5" fill="none"/><path d="M2.6 3.5L3.9 4.7L7.6 1.1" stroke="#1a1a1a" stroke-width="1.5" fill="none"/></svg><div class="a" style="left:992px;top:485.90000000000003px;width:6.8px;height:6.6px;border:1px solid #dedede;border-radius:1.4px;background:#fff"></div><div class="a" style="left:47px;top:497.62px;width:964.3px;height:17.52px;background:#f9f9f9;"></div><div class="a" style="left:47px;top:513.84px;width:964.3px;height:1.3px;background:#ededed;"></div><div class="t" style="left:49.7px;top:502px;font-size:8.333px;transform:scaleX(0.9);">21</div><div class="t" style="left:77.9px;top:502px;font-size:8.333px;transform:scaleX(0.9);">FW</div><div class="t" style="left:107.10000000000001px;top:502px;font-size:8.333px;transform:scaleX(0.9);">019</div><svg class="a" style="left:135.9px;top:505.42px;" width="7" height="1.6" viewBox="0 0 7 1.6"><path d="M0 0H2V1.6H0ZM2.5 0H4.5V1.6H2.5ZM5 0H7V1.6H5Z" fill="#6a6a6a"/></svg><svg class="a" style="left:155.0px;top:502.22px;" width="6" height="8" viewBox="0 0 6 8"><path d="M0 0H3.4L6 2.6V8H0Z" fill="#555"/><path d="M3.9 0.2L5.8 2.1H3.9Z" fill="#fff" opacity="0.85"/></svg><div class="t" style="left:169.0px;top:502px;font-size:8.333px;transform:scaleX(0.9);color:#309830;-webkit-text-stroke:0.2px currentColor;">No</div><div class="t" style="left:221.1px;top:501px;font-size:8.333px;transform:scaleX(0.9);color:#f02525;-webkit-text-stroke:0.2px currentColor;">Yes</div><svg class="a" style="left:237.0px;top:504.42px;" width="7" height="2" viewBox="0 0 7 2"><circle cx="1" cy="1" r="0.9" fill="#444"/><circle cx="3.2" cy="1" r="0.9" fill="#444"/><circle cx="5.4" cy="1" r="0.9" fill="#444"/></svg><svg class="a" style="left:260.6px;top:503.02px;" width="6" height="8" viewBox="0 0 6 8"><path d="M0 0H3.4L6 2.6V8H0Z" fill="#555"/><path d="M3.9 0.2L5.8 2.1H3.9Z" fill="#fff" opacity="0.85"/></svg><div class="t" style="left:274.09999999999997px;top:502px;font-size:8.333px;transform:scaleX(0.9);color:#309830;-webkit-text-stroke:0.2px currentColor;">No</div><div class="t" style="left:319.3px;top:502px;font-size:8.333px;transform:scaleX(0.9);">-</div><div class="t" style="left:347.5px;top:502px;font-size:8.333px;transform:scaleX(0.9);">-</div><div class="t" style="left:557.6px;top:502px;font-size:8.333px;transform:scaleX(0.9);">-</div><div class="t" style="left:585.3000000000001px;top:502px;font-size:8.333px;transform:scaleX(0.9);">-</div><div class="t" style="left:795.5px;top:502px;font-size:8.333px;transform:scaleX(0.9);">141-ISO-8.1_21.3-2.7</div><div class="t" style="left:922.5px;top:502px;font-size:8.333px;transform:scaleX(0.9);">-</div><div class="a" style="left:934.4px;top:500.02px;width:17.1px;height:12.6px;border:1px solid #a6a6a6;border-radius:2.4px;background:linear-gradient(#fff,#ececec)"></div><svg class="a" style="left:939.4px;top:502.32px;" width="8.4" height="8.4" viewBox="0 0 8.4 8.4"><path d="M0.4 8L0.9 6.1L2.3 7.5Z" fill="#ff1a1a"/><path d="M1.5 5.5L5.6 1.4L7 2.8L2.9 6.9Z" fill="#ff1a1a"/><path d="M6.1 0.9L6.8 0.2Q7.2 -0.1 7.6 0.3L8.1 0.8Q8.5 1.2 8.2 1.6L7.5 2.3Z" fill="#ff1a1a"/></svg><div class="a" style="left:953.0px;top:500.02px;width:17.1px;height:12.6px;border:1px solid #a6a6a6;border-radius:2.4px;background:linear-gradient(#fff,#ececec)"></div><svg class="a" style="left:957.9px;top:501.22px;" width="7.6" height="8.6" viewBox="0 0 7.6 8.6"><path d="M0 1.1H7.6V2.1H0Z" fill="#f2897c"/><path d="M2.8 0H4.8V1.2H2.8Z" fill="#f2897c"/><path d="M1 2.4H6.6L6.1 8.6H1.5Z" fill="#f2897c"/><path d="M2.7 3.3V7.8M3.8 3.3V7.8M4.9 3.3V7.8" stroke="#f7b3aa" stroke-width="0.45"/></svg><div class="a" style="left:971.7px;top:500.02px;width:17.1px;height:12.6px;border:1px solid #a6a6a6;border-radius:2.4px;background:linear-gradient(#fff,#ececec)"></div><svg class="a" style="left:976.0px;top:502.22px;" width="8.6" height="7.6" viewBox="0 0 8.6 7.6"><path d="M7.1 4.3A3.2 3.2 0 1 1 5.6 1.1" stroke="#1a1a1a" stroke-width="1.5" fill="none"/><path d="M2.6 3.5L3.9 4.7L7.6 1.1" stroke="#1a1a1a" stroke-width="1.5" fill="none"/></svg><div class="a" style="left:992px;top:503.42px;width:6.8px;height:6.6px;border:1px solid #dedede;border-radius:1.4px;background:#fff"></div><div class="a" style="left:47px;top:515.14px;width:964.3px;height:17.52px;background:#ffffff;"></div><div class="a" style="left:47px;top:531.36px;width:964.3px;height:1.3px;background:#ededed;"></div><div class="t" style="left:49.7px;top:520px;font-size:8.333px;transform:scaleX(0.9);">22</div><div class="t" style="left:107.10000000000001px;top:520px;font-size:8.333px;transform:scaleX(0.9);">019</div><svg class="a" style="left:135.9px;top:522.9399999999999px;" width="7" height="1.6" viewBox="0 0 7 1.6"><path d="M0 0H2V1.6H0ZM2.5 0H4.5V1.6H2.5ZM5 0H7V1.6H5Z" fill="#6a6a6a"/></svg><svg class="a" style="left:155.0px;top:519.74px;" width="6" height="8" viewBox="0 0 6 8"><path d="M0 0H3.4L6 2.6V8H0Z" fill="#555"/><path d="M3.9 0.2L5.8 2.1H3.9Z" fill="#fff" opacity="0.85"/></svg><div class="t" style="left:169.0px;top:520px;font-size:8.333px;transform:scaleX(0.9);color:#309830;-webkit-text-stroke:0.2px currentColor;">No</div><div class="t" style="left:221.1px;top:519px;font-size:8.333px;transform:scaleX(0.9);color:#f02525;-webkit-text-stroke:0.2px currentColor;">Yes</div><svg class="a" style="left:260.6px;top:520.54px;" width="6" height="8" viewBox="0 0 6 8"><path d="M0 0H3.4L6 2.6V8H0Z" fill="#555"/><path d="M3.9 0.2L5.8 2.1H3.9Z" fill="#fff" opacity="0.85"/></svg><div class="t" style="left:274.09999999999997px;top:520px;font-size:8.333px;transform:scaleX(0.9);color:#309830;-webkit-text-stroke:0.2px currentColor;">No</div><div class="t" style="left:319.3px;top:520px;font-size:8.333px;transform:scaleX(0.9);">0002</div><div class="t" style="left:391.0px;top:520px;font-size:8.333px;transform:scaleX(0.9);">0///A234 Gr WPB/Elbow 45</div><div class="t" style="left:557.6px;top:520px;font-size:8.333px;transform:scaleX(0.9);">0001</div><div class="t" style="left:629.2px;top:520px;font-size:8.333px;transform:scaleX(0.9);">0/12//A234 Gr WPB/Pipe</div><div class="t" style="left:795.5px;top:520px;font-size:8.333px;transform:scaleX(0.9);">141-ISO-8.1_21.3-2.7</div><div class="t" style="left:922.5px;top:520px;font-size:8.333px;transform:scaleX(0.9);">-</div><div class="a" style="left:934.4px;top:517.54px;width:17.1px;height:12.6px;border:1px solid #a6a6a6;border-radius:2.4px;background:linear-gradient(#fff,#ececec)"></div><svg class="a" style="left:939.4px;top:519.84px;" width="8.4" height="8.4" viewBox="0 0 8.4 8.4"><path d="M0.4 8L0.9 6.1L2.3 7.5Z" fill="#ff1a1a"/><path d="M1.5 5.5L5.6 1.4L7 2.8L2.9 6.9Z" fill="#ff1a1a"/><path d="M6.1 0.9L6.8 0.2Q7.2 -0.1 7.6 0.3L8.1 0.8Q8.5 1.2 8.2 1.6L7.5 2.3Z" fill="#ff1a1a"/></svg><div class="a" style="left:953.0px;top:517.54px;width:17.1px;height:12.6px;border:1px solid #a6a6a6;border-radius:2.4px;background:linear-gradient(#fff,#ececec)"></div><svg class="a" style="left:957.9px;top:518.74px;" width="7.6" height="8.6" viewBox="0 0 7.6 8.6"><path d="M0 1.1H7.6V2.1H0Z" fill="#f2897c"/><path d="M2.8 0H4.8V1.2H2.8Z" fill="#f2897c"/><path d="M1 2.4H6.6L6.1 8.6H1.5Z" fill="#f2897c"/><path d="M2.7 3.3V7.8M3.8 3.3V7.8M4.9 3.3V7.8" stroke="#f7b3aa" stroke-width="0.45"/></svg><div class="a" style="left:971.7px;top:517.54px;width:17.1px;height:12.6px;border:1px solid #a6a6a6;border-radius:2.4px;background:linear-gradient(#fff,#ececec)"></div><svg class="a" style="left:976.0px;top:519.74px;" width="8.6" height="7.6" viewBox="0 0 8.6 7.6"><path d="M7.1 4.3A3.2 3.2 0 1 1 5.6 1.1" stroke="#1a1a1a" stroke-width="1.5" fill="none"/><path d="M2.6 3.5L3.9 4.7L7.6 1.1" stroke="#1a1a1a" stroke-width="1.5" fill="none"/></svg><div class="a" style="left:992px;top:520.9399999999999px;width:6.8px;height:6.6px;border:1px solid #dedede;border-radius:1.4px;background:#fff"></div><div class="a" style="left:47px;top:532.6600000000001px;width:964.3px;height:17.52px;background:#f9f9f9;"></div><div class="a" style="left:47px;top:548.8800000000001px;width:964.3px;height:1.3px;background:#ededed;"></div><svg class="a" style="left:135.9px;top:540.46px;" width="7" height="1.6" viewBox="0 0 7 1.6"><path d="M0 0H2V1.6H0ZM2.5 0H4.5V1.6H2.5ZM5 0H7V1.6H5Z" fill="#6a6a6a"/></svg><svg class="a" style="left:155.0px;top:537.2600000000001px;" width="6" height="8" viewBox="0 0 6 8"><path d="M0 0H3.4L6 2.6V8H0Z" fill="#555"/><path d="M3.9 0.2L5.8 2.1H3.9Z" fill="#fff" opacity="0.85"/></svg><div class="t" style="left:169.0px;top:537px;font-size:8.333px;transform:scaleX(0.9);color:#309830;-webkit-text-stroke:0.2px currentColor;">No</div><div class="t" style="left:221.1px;top:536px;font-size:8.333px;transform:scaleX(0.9);color:#f02525;-webkit-text-stroke:0.2px currentColor;">Yes</div><svg class="a" style="left:237.0px;top:539.46px;" width="7" height="2" viewBox="0 0 7 2"><circle cx="1" cy="1" r="0.9" fill="#444"/><circle cx="3.2" cy="1" r="0.9" fill="#444"/><circle cx="5.4" cy="1" r="0.9" fill="#444"/></svg><svg class="a" style="left:260.6px;top:538.0600000000001px;" width="6" height="8" viewBox="0 0 6 8"><path d="M0 0H3.4L6 2.6V8H0Z" fill="#555"/><path d="M3.9 0.2L5.8 2.1H3.9Z" fill="#fff" opacity="0.85"/></svg><div class="t" style="left:274.09999999999997px;top:537px;font-size:8.333px;transform:scaleX(0.9);color:#309830;-webkit-text-stroke:0.2px currentColor;">No</div><div class="t" style="left:319.3px;top:537px;font-size:8.333px;transform:scaleX(0.9);">-</div><div class="t" style="left:347.5px;top:537px;font-size:8.333px;transform:scaleX(0.9);">-</div><div class="t" style="left:557.6px;top:537px;font-size:8.333px;transform:scaleX(0.9);">-</div><div class="t" style="left:585.3000000000001px;top:537px;font-size:8.333px;transform:scaleX(0.9);">-</div><div class="t" style="left:795.5px;top:537px;font-size:8.333px;transform:scaleX(0.9);">141-ISO-8.1_21.3-2.7</div><div class="t" style="left:922.5px;top:537px;font-size:8.333px;transform:scaleX(0.9);">-</div><div class="a" style="left:934.4px;top:535.0600000000001px;width:17.1px;height:12.6px;border:1px solid #a6a6a6;border-radius:2.4px;background:linear-gradient(#fff,#ececec)"></div><svg class="a" style="left:939.4px;top:537.3600000000001px;" width="8.4" height="8.4" viewBox="0 0 8.4 8.4"><path d="M0.4 8L0.9 6.1L2.3 7.5Z" fill="#ff1a1a"/><path d="M1.5 5.5L5.6 1.4L7 2.8L2.9 6.9Z" fill="#ff1a1a"/><path d="M6.1 0.9L6.8 0.2Q7.2 -0.1 7.6 0.3L8.1 0.8Q8.5 1.2 8.2 1.6L7.5 2.3Z" fill="#ff1a1a"/></svg><div class="a" style="left:953.0px;top:535.0600000000001px;width:17.1px;height:12.6px;border:1px solid #a6a6a6;border-radius:2.4px;background:linear-gradient(#fff,#ececec)"></div><svg class="a" style="left:957.9px;top:536.2600000000001px;" width="7.6" height="8.6" viewBox="0 0 7.6 8.6"><path d="M0 1.1H7.6V2.1H0Z" fill="#f2897c"/><path d="M2.8 0H4.8V1.2H2.8Z" fill="#f2897c"/><path d="M1 2.4H6.6L6.1 8.6H1.5Z" fill="#f2897c"/><path d="M2.7 3.3V7.8M3.8 3.3V7.8M4.9 3.3V7.8" stroke="#f7b3aa" stroke-width="0.45"/></svg><div class="a" style="left:971.7px;top:535.0600000000001px;width:17.1px;height:12.6px;border:1px solid #a6a6a6;border-radius:2.4px;background:linear-gradient(#fff,#ececec)"></div><svg class="a" style="left:976.0px;top:537.2600000000001px;" width="8.6" height="7.6" viewBox="0 0 8.6 7.6"><path d="M7.1 4.3A3.2 3.2 0 1 1 5.6 1.1" stroke="#1a1a1a" stroke-width="1.5" fill="none"/><path d="M2.6 3.5L3.9 4.7L7.6 1.1" stroke="#1a1a1a" stroke-width="1.5" fill="none"/></svg><div class="a" style="left:992px;top:538.46px;width:6.8px;height:6.6px;border:1px solid #dedede;border-radius:1.4px;background:#fff"></div><div class="a" style="left:74.8px;top:203.3px;width:1.6px;height:346.88000000000005px;background:#ececec;"></div><div class="a" style="left:104.0px;top:203.3px;width:1.6px;height:346.88000000000005px;background:#ececec;"></div><div class="a" style="left:133.0px;top:203.3px;width:1.6px;height:346.88000000000005px;background:#ececec;"></div><div class="a" style="left:165.9px;top:203.3px;width:1.6px;height:346.88000000000005px;background:#ececec;"></div><div class="a" style="left:219.2px;top:203.3px;width:1.6px;height:346.88000000000005px;background:#ececec;"></div><div class="a" style="left:271.3px;top:203.3px;width:1.6px;height:346.88000000000005px;background:#ececec;"></div><div class="a" style="left:316.2px;top:203.3px;width:1.8px;height:346.88000000000005px;background:#dedede;"></div><div class="a" style="left:344.40000000000003px;top:203.3px;width:1.6px;height:346.88000000000005px;background:#ececec;"></div><div class="a" style="left:387.90000000000003px;top:203.3px;width:1.6px;height:346.88000000000005px;background:#ececec;"></div><div class="a" style="left:554.5px;top:203.3px;width:1.8px;height:346.88000000000005px;background:#dedede;"></div><div class="a" style="left:582.2px;top:203.3px;width:1.6px;height:346.88000000000005px;background:#ececec;"></div><div class="a" style="left:626.1px;top:203.3px;width:1.6px;height:346.88000000000005px;background:#ececec;"></div><div class="a" style="left:791.8000000000001px;top:203.3px;width:1.6px;height:346.88000000000005px;background:#ececec;"></div><div class="a" style="left:920.1px;top:203.3px;width:1.6px;height:346.88000000000005px;background:#ececec;"></div><div class="a" style="left:930.9px;top:203.3px;width:1.6px;height:346.88000000000005px;background:#ececec;"></div><div class="a" style="left:47px;top:216.3px;width:964.3px;height:1px;background:#e9e9e9;"></div><div class="a" style="left:896.2px;top:102.2px;width:92px;height:123px;background:#fff;border:1px solid rgba(0,0,0,0.2);border-radius:0 0 2px 2px;box-shadow:0 3px 6px rgba(0,0,0,0.16)"></div><div class="t" style="left:905.7px;top:111px;font-size:8.278px;transform:scaleX(0.9);color:#666;">LISL Report</div><div class="t" style="left:905.7px;top:128px;font-size:8.278px;transform:scaleX(0.9);color:#666;">LISL Report [GU]</div><div class="t" style="left:905.7px;top:144px;font-size:8.278px;transform:scaleX(0.9);color:#666;">Blank LISL template</div><div class="t" style="left:905.7px;top:161px;font-size:8.278px;transform:scaleX(0.9);color:#666;">Visual inspection</div><div class="a" style="left:897px;top:173.2px;width:89.8px;height:15.4px;background:#f4f4f4;border:1.6px solid #ee3c3c;border-radius:2px"></div><div class="t" style="left:905.7px;top:178px;font-size:8.278px;transform:scaleX(0.9);color:#666;">Weld card</div><div class="t" style="left:905.7px;top:194px;font-size:8.278px;transform:scaleX(0.9);color:#666;">Weld labels</div><div class="t" style="left:905.7px;top:211px;font-size:8.278px;transform:scaleX(0.9);color:#666;">ISO Book</div><div class="a" style="left:1.5px;top:535.8px;width:302px;height:20px;background:#dedede;border:1px solid #c9c9c9;border-radius:3px"></div><div class="t" style="left:5.9px;top:537px;font-size:9.500px;transform:scaleX(0.9);color:#2e2e2e;">Open #generateLabelsOnMultipleWelds op deze pagina in een nieuw tabblad</div><div class="a" style="left:989.8px;top:542.6px;width:40px;height:12px;background:#fff;border-top:1px solid #e4e4e4;border-left:1px solid #e4e4e4;border-radius:1px 0 0 0"></div><div class="t" style="left:995px;top:544px;font-size:7.333px;transform:scaleX(0.9);color:#888;">0.44s</div><svg class="a" style="left:1021px;top:545px;" width="3" height="5" viewBox="0 0 3 5"><path d="M3 0V5H0Z" fill="#111"/></svg>
</div></body></html>
